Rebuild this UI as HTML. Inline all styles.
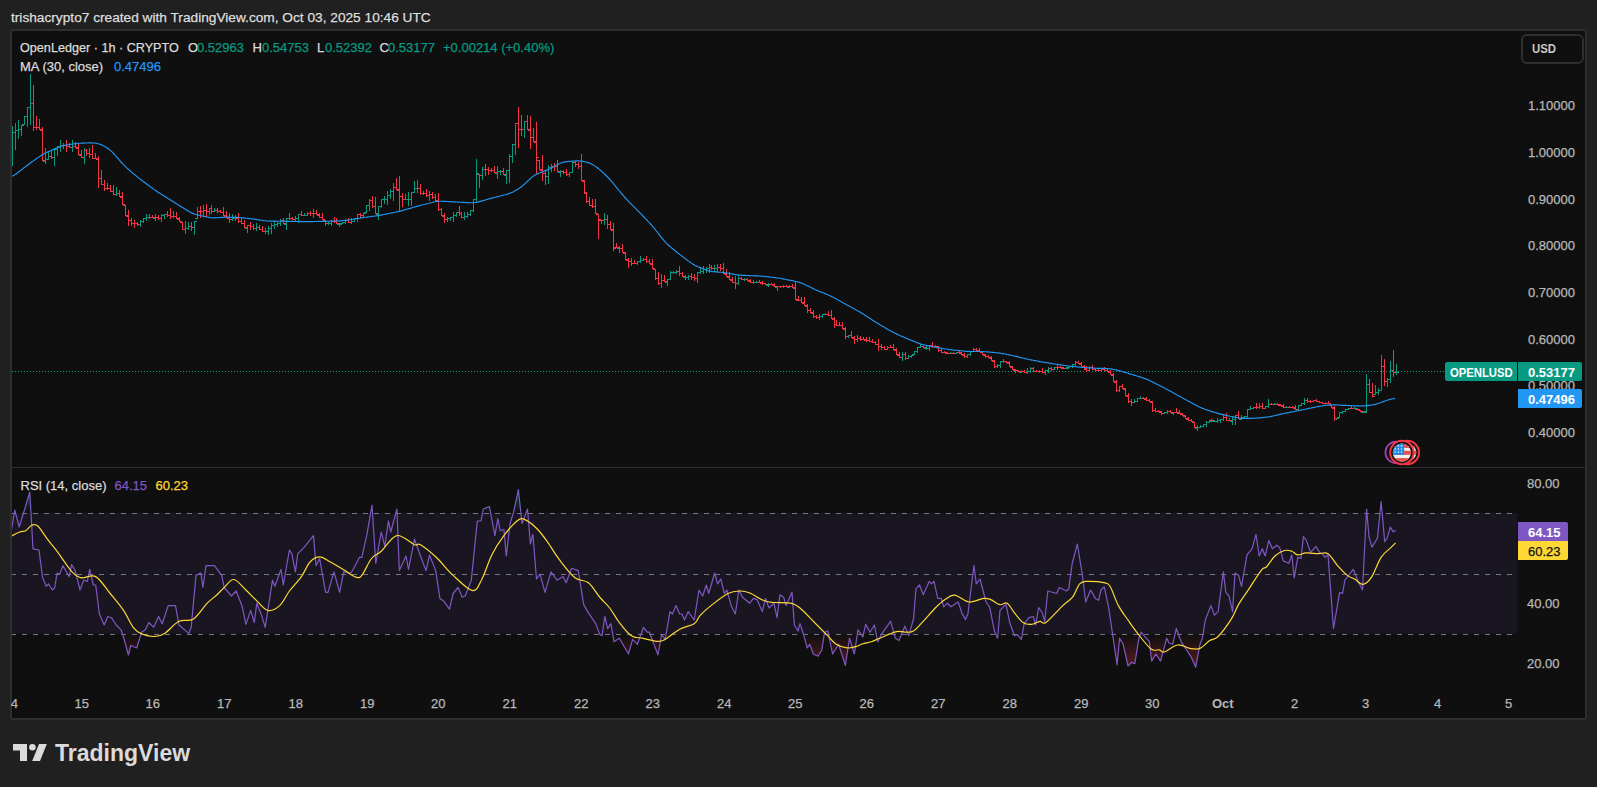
<!DOCTYPE html>
<html><head><meta charset="utf-8">
<style>
html,body{margin:0;padding:0}
body{width:1597px;height:787px;background:#202020;position:relative;overflow:hidden;font-family:"Liberation Sans",sans-serif;}
.t{position:absolute;white-space:nowrap;font-size:13px;line-height:15px;color:#dbdbdb;-webkit-text-stroke:0.25px currentColor}
.frame{position:absolute;left:10px;top:29px;width:1573px;height:687px;border:2px solid #2e2e2e;border-radius:3px;background:#0f0f0f}
.ax{position:absolute;white-space:nowrap;font-size:13px;line-height:15px;color:#b8b8b8;-webkit-text-stroke:0.25px currentColor}
.g{color:#089981}
.lab{position:absolute;height:19px;}
</style></head><body>
<div class="t" style="left:11px;top:9.6px;font-size:13.7px;color:#dedede">trishacrypto7 created with TradingView.com, Oct 03, 2025 10:46 UTC</div>
<div class="frame"></div>

<svg width="1597" height="787" style="position:absolute;left:0;top:0">
<defs>
<linearGradient id="gl" x1="0" y1="633.5" x2="0" y2="668" gradientUnits="userSpaceOnUse">
<stop offset="0" stop-color="#f23645" stop-opacity="0"/><stop offset="1" stop-color="#f23645" stop-opacity="0.32"/></linearGradient>
<linearGradient id="gh" x1="0" y1="513.5" x2="0" y2="488" gradientUnits="userSpaceOnUse">
<stop offset="0" stop-color="#089981" stop-opacity="0"/><stop offset="1" stop-color="#089981" stop-opacity="0.5"/></linearGradient>
<clipPath id="cp"><rect x="12" y="31" width="1504" height="436"/></clipPath>
<clipPath id="cr"><rect x="12" y="468" width="1505" height="222"/></clipPath>
</defs>
<line x1="12" y1="371.5" x2="1516" y2="371.5" stroke="#089981" stroke-width="1" stroke-dasharray="1 2"/>
<g clip-path="url(#cp)" shape-rendering="crispEdges">
<path d="M12 126h1v40h-1z M10 146h2v1h-2z M13 132h2v1h-2z M15 123h1v27h-1z M13 132h2v1h-2z M16 130h2v1h-2z M18 120h1v19h-1z M16 130h2v1h-2z M19 129h2v1h-2z M21 125h1v11h-1z M19 129h2v1h-2z M22 125h2v1h-2z M24 116h1v9h-1z M22 124h2v1h-2z M25 116h2v1h-2z M27 107h1v20h-1z M25 116h2v1h-2z M28 107h2v1h-2z M30 74h1v51h-1z M28 107h2v1h-2z M31 103h2v1h-2z M45 148h1v16h-1z M43 161h2v1h-2z M46 159h2v1h-2z M48 151h1v9h-1z M46 159h2v1h-2z M49 156h2v1h-2z M54 148h1v18h-1z M52 157h2v1h-2z M55 149h2v1h-2z M57 146h1v10h-1z M55 149h2v1h-2z M58 146h2v1h-2z M60 140h1v12h-1z M58 146h2v1h-2z M61 145h2v1h-2z M72 140h1v12h-1z M70 147h2v1h-2z M73 146h2v1h-2z M84 148h1v16h-1z M82 157h2v1h-2z M85 150h2v1h-2z M116 187h1v9h-1z M114 194h2v1h-2z M117 193h2v1h-2z M140 220h1v7h-1z M138 224h2v1h-2z M141 221h2v1h-2z M143 218h1v5h-1z M141 221h2v1h-2z M144 218h2v1h-2z M146 214h1v7h-1z M144 218h2v1h-2z M147 217h2v1h-2z M149 214h1v5h-1z M147 217h2v1h-2z M150 217h2v1h-2z M155 214h1v7h-1z M153 218h2v1h-2z M156 217h2v1h-2z M161 214h1v8h-1z M159 218h2v1h-2z M162 215h2v1h-2z M164 214h1v5h-1z M162 215h2v1h-2z M165 214h2v1h-2z M185 221h1v13h-1z M183 229h2v1h-2z M186 228h2v1h-2z M188 222h1v8h-1z M186 228h2v1h-2z M189 226h2v1h-2z M194 221h1v14h-1z M192 227h2v1h-2z M195 221h2v1h-2z M197 207h1v12h-1z M195 218h2v1h-2z M198 211h2v1h-2z M203 205h1v11h-1z M201 211h2v1h-2z M204 210h2v1h-2z M209 208h1v7h-1z M207 211h2v1h-2z M210 208h2v1h-2z M214 208h1v4h-1z M212 211h2v1h-2z M215 210h2v1h-2z M232 214h1v7h-1z M230 219h2v1h-2z M233 218h2v1h-2z M235 215h1v6h-1z M233 218h2v1h-2z M236 218h2v1h-2z M247 225h1v8h-1z M245 228h2v1h-2z M248 225h2v1h-2z M256 223h1v8h-1z M254 228h2v1h-2z M257 227h2v1h-2z M265 228h1v6h-1z M263 231h2v1h-2z M266 231h2v1h-2z M268 226h1v9h-1z M266 231h2v1h-2z M269 228h2v1h-2z M271 223h1v11h-1z M269 228h2v1h-2z M272 225h2v1h-2z M274 221h1v8h-1z M272 225h2v1h-2z M275 224h2v1h-2z M277 222h1v5h-1z M275 224h2v1h-2z M278 223h2v1h-2z M280 219h1v7h-1z M278 223h2v1h-2z M281 220h2v1h-2z M286 218h1v12h-1z M284 224h2v1h-2z M287 218h2v1h-2z M289 213h1v7h-1z M287 218h2v1h-2z M290 218h2v1h-2z M295 216h1v6h-1z M293 219h2v1h-2z M296 218h2v1h-2z M298 214h1v9h-1z M296 218h2v1h-2z M299 214h2v1h-2z M304 213h1v3h-1z M302 215h2v1h-2z M305 215h2v1h-2z M307 212h1v4h-1z M305 215h2v1h-2z M308 213h2v1h-2z M313 209h1v9h-1z M311 213h2v1h-2z M314 213h2v1h-2z M328 222h1v3h-1z M326 223h2v1h-2z M329 223h2v1h-2z M331 220h1v6h-1z M329 223h2v1h-2z M332 221h2v1h-2z M339 223h1v4h-1z M337 224h2v1h-2z M340 224h2v1h-2z M342 222h1v2h-1z M340 223h2v1h-2z M343 222h2v1h-2z M345 219h1v5h-1z M343 222h2v1h-2z M346 220h2v1h-2z M351 218h1v6h-1z M349 222h2v1h-2z M352 221h2v1h-2z M354 218h1v4h-1z M352 221h2v1h-2z M355 218h2v1h-2z M357 214h1v8h-1z M355 218h2v1h-2z M358 214h2v1h-2z M363 213h1v5h-1z M361 215h2v1h-2z M364 213h2v1h-2z M366 205h1v8h-1z M364 212h2v1h-2z M367 205h2v1h-2z M369 199h1v12h-1z M367 205h2v1h-2z M370 200h2v1h-2z M378 206h1v14h-1z M376 214h2v1h-2z M379 206h2v1h-2z M381 199h1v9h-1z M379 206h2v1h-2z M382 199h2v1h-2z M384 196h1v8h-1z M382 199h2v1h-2z M385 199h2v1h-2z M387 191h1v14h-1z M385 199h2v1h-2z M388 195h2v1h-2z M390 189h1v10h-1z M388 195h2v1h-2z M391 191h2v1h-2z M393 183h1v18h-1z M391 191h2v1h-2z M394 187h2v1h-2z M405 194h1v6h-1z M403 199h2v1h-2z M406 199h2v1h-2z M408 192h1v14h-1z M406 199h2v1h-2z M409 199h2v1h-2z M411 192h1v14h-1z M409 199h2v1h-2z M412 192h2v1h-2z M414 181h1v12h-1z M412 192h2v1h-2z M415 188h2v1h-2z M417 180h1v13h-1z M415 188h2v1h-2z M418 188h2v1h-2z M429 191h1v10h-1z M427 195h2v1h-2z M430 194h2v1h-2z M447 217h1v5h-1z M445 219h2v1h-2z M448 218h2v1h-2z M450 217h1v4h-1z M448 218h2v1h-2z M451 217h2v1h-2z M453 212h1v10h-1z M451 217h2v1h-2z M454 215h2v1h-2z M456 212h1v5h-1z M454 215h2v1h-2z M457 212h2v1h-2z M464 212h1v8h-1z M462 217h2v1h-2z M465 216h2v1h-2z M467 212h1v6h-1z M465 216h2v1h-2z M468 214h2v1h-2z M470 210h1v6h-1z M468 214h2v1h-2z M471 210h2v1h-2z M473 199h1v13h-1z M471 210h2v1h-2z M474 199h2v1h-2z M476 159h1v44h-1z M474 199h2v1h-2z M477 173h2v1h-2z M482 167h1v13h-1z M480 175h2v1h-2z M483 169h2v1h-2z M497 166h1v13h-1z M495 173h2v1h-2z M498 171h2v1h-2z M500 170h1v5h-1z M498 171h2v1h-2z M501 171h2v1h-2z M506 170h1v14h-1z M504 175h2v1h-2z M507 170h2v1h-2z M509 154h1v29h-1z M507 170h2v1h-2z M510 156h2v1h-2z M512 144h1v19h-1z M510 156h2v1h-2z M513 144h2v1h-2z M515 123h1v32h-1z M513 144h2v1h-2z M516 123h2v1h-2z M524 121h1v17h-1z M522 129h2v1h-2z M525 121h2v1h-2z M548 165h1v19h-1z M546 176h2v1h-2z M549 167h2v1h-2z M551 164h1v8h-1z M549 167h2v1h-2z M552 166h2v1h-2z M560 170h1v7h-1z M558 172h2v1h-2z M561 171h2v1h-2z M569 172h1v5h-1z M567 174h2v1h-2z M570 172h2v1h-2z M572 161h1v12h-1z M570 172h2v1h-2z M573 162h2v1h-2z M604 213h1v12h-1z M602 220h2v1h-2z M605 219h2v1h-2z M619 246h1v7h-1z M617 248h2v1h-2z M620 248h2v1h-2z M637 261h1v4h-1z M635 263h2v1h-2z M638 261h2v1h-2z M640 256h1v7h-1z M638 261h2v1h-2z M641 260h2v1h-2z M643 258h1v3h-1z M641 260h2v1h-2z M644 259h2v1h-2z M661 274h1v14h-1z M659 283h2v1h-2z M662 280h2v1h-2z M667 279h1v7h-1z M665 282h2v1h-2z M668 279h2v1h-2z M670 271h1v9h-1z M668 279h2v1h-2z M671 272h2v1h-2z M673 271h1v3h-1z M671 272h2v1h-2z M674 272h2v1h-2z M676 270h1v4h-1z M674 272h2v1h-2z M677 271h2v1h-2z M685 275h1v5h-1z M683 277h2v1h-2z M686 277h2v1h-2z M688 275h1v5h-1z M686 277h2v1h-2z M689 276h2v1h-2z M697 272h1v11h-1z M695 278h2v1h-2z M698 272h2v1h-2z M700 267h1v7h-1z M698 272h2v1h-2z M701 271h2v1h-2z M703 266h1v8h-1z M701 271h2v1h-2z M704 269h2v1h-2z M706 267h1v6h-1z M704 269h2v1h-2z M707 268h2v1h-2z M709 264h1v9h-1z M707 268h2v1h-2z M710 267h2v1h-2z M714 265h1v7h-1z M712 268h2v1h-2z M715 268h2v1h-2z M717 264h1v8h-1z M715 268h2v1h-2z M718 267h2v1h-2z M738 275h1v10h-1z M736 283h2v1h-2z M739 278h2v1h-2z M744 278h1v3h-1z M742 279h2v1h-2z M745 279h2v1h-2z M753 280h1v4h-1z M751 282h2v1h-2z M754 282h2v1h-2z M756 281h1v2h-1z M754 282h2v1h-2z M757 282h2v1h-2z M768 283h1v4h-1z M766 285h2v1h-2z M769 284h2v1h-2z M777 286h1v5h-1z M775 287h2v1h-2z M778 286h2v1h-2z M783 285h1v3h-1z M781 286h2v1h-2z M784 286h2v1h-2z M789 285h1v3h-1z M787 287h2v1h-2z M790 286h2v1h-2z M819 314h1v6h-1z M817 317h2v1h-2z M820 316h2v1h-2z M822 314h1v4h-1z M820 316h2v1h-2z M823 314h2v1h-2z M825 313h1v2h-1z M823 314h2v1h-2z M826 314h2v1h-2z M848 335h1v3h-1z M846 336h2v1h-2z M849 335h2v1h-2z M857 335h1v7h-1z M855 339h2v1h-2z M858 338h2v1h-2z M887 346h1v4h-1z M885 349h2v1h-2z M888 347h2v1h-2z M902 352h1v9h-1z M900 357h2v1h-2z M903 354h2v1h-2z M908 355h1v4h-1z M906 358h2v1h-2z M909 356h2v1h-2z M911 355h1v3h-1z M909 356h2v1h-2z M912 355h2v1h-2z M914 351h1v4h-1z M912 354h2v1h-2z M915 351h2v1h-2z M917 347h1v6h-1z M915 351h2v1h-2z M918 347h2v1h-2z M920 344h1v4h-1z M918 347h2v1h-2z M921 346h2v1h-2z M926 345h1v5h-1z M924 348h2v1h-2z M927 348h2v1h-2z M929 345h1v6h-1z M927 348h2v1h-2z M930 345h2v1h-2z M950 352h1v2h-1z M948 353h2v1h-2z M951 353h2v1h-2z M956 352h1v2h-1z M954 353h2v1h-2z M957 352h2v1h-2z M967 354h1v4h-1z M965 356h2v1h-2z M968 354h2v1h-2z M970 351h1v5h-1z M968 354h2v1h-2z M971 351h2v1h-2z M973 348h1v4h-1z M971 351h2v1h-2z M974 349h2v1h-2z M997 364h1v4h-1z M995 366h2v1h-2z M998 365h2v1h-2z M1000 361h1v7h-1z M998 365h2v1h-2z M1001 361h2v1h-2z M1003 359h1v4h-1z M1001 361h2v1h-2z M1004 361h2v1h-2z M1021 370h1v3h-1z M1019 372h2v1h-2z M1022 371h2v1h-2z M1027 368h1v6h-1z M1025 372h2v1h-2z M1028 371h2v1h-2z M1030 367h1v6h-1z M1028 371h2v1h-2z M1031 368h2v1h-2z M1039 370h1v3h-1z M1037 371h2v1h-2z M1040 371h2v1h-2z M1045 370h1v5h-1z M1043 372h2v1h-2z M1046 370h2v1h-2z M1048 367h1v6h-1z M1046 370h2v1h-2z M1049 368h2v1h-2z M1054 367h1v3h-1z M1052 369h2v1h-2z M1055 367h2v1h-2z M1066 367h1v2h-1z M1064 368h2v1h-2z M1067 368h2v1h-2z M1069 366h1v2h-1z M1067 367h2v1h-2z M1070 366h2v1h-2z M1072 364h1v4h-1z M1070 366h2v1h-2z M1073 364h2v1h-2z M1075 361h1v5h-1z M1073 364h2v1h-2z M1076 362h2v1h-2z M1089 366h1v6h-1z M1087 370h2v1h-2z M1090 367h2v1h-2z M1101 369h1v3h-1z M1099 370h2v1h-2z M1102 369h2v1h-2z M1119 386h1v6h-1z M1117 390h2v1h-2z M1120 386h2v1h-2z M1134 399h1v4h-1z M1132 402h2v1h-2z M1135 401h2v1h-2z M1137 398h1v4h-1z M1135 401h2v1h-2z M1138 398h2v1h-2z M1140 396h1v3h-1z M1138 398h2v1h-2z M1141 398h2v1h-2z M1164 412h1v2h-1z M1162 413h2v1h-2z M1165 412h2v1h-2z M1167 410h1v4h-1z M1165 412h2v1h-2z M1168 411h2v1h-2z M1173 412h1v3h-1z M1171 413h2v1h-2z M1174 412h2v1h-2z M1197 425h1v6h-1z M1195 428h2v1h-2z M1198 427h2v1h-2z M1200 425h1v3h-1z M1198 427h2v1h-2z M1201 426h2v1h-2z M1203 424h1v3h-1z M1201 426h2v1h-2z M1204 424h2v1h-2z M1206 421h1v6h-1z M1204 424h2v1h-2z M1207 422h2v1h-2z M1209 420h1v3h-1z M1207 422h2v1h-2z M1210 421h2v1h-2z M1214 420h1v2h-1z M1212 421h2v1h-2z M1215 421h2v1h-2z M1217 418h1v5h-1z M1215 421h2v1h-2z M1218 420h2v1h-2z M1220 419h1v4h-1z M1218 420h2v1h-2z M1221 419h2v1h-2z M1223 414h1v7h-1z M1221 419h2v1h-2z M1224 417h2v1h-2z M1232 416h1v9h-1z M1230 421h2v1h-2z M1233 419h2v1h-2z M1235 415h1v10h-1z M1233 419h2v1h-2z M1236 415h2v1h-2z M1241 415h1v5h-1z M1239 419h2v1h-2z M1242 417h2v1h-2z M1244 416h1v3h-1z M1242 417h2v1h-2z M1245 416h2v1h-2z M1247 409h1v9h-1z M1245 416h2v1h-2z M1248 409h2v1h-2z M1250 406h1v4h-1z M1248 409h2v1h-2z M1251 408h2v1h-2z M1253 407h1v2h-1z M1251 408h2v1h-2z M1254 407h2v1h-2z M1259 403h1v6h-1z M1257 407h2v1h-2z M1260 406h2v1h-2z M1265 406h1v3h-1z M1263 408h2v1h-2z M1266 406h2v1h-2z M1268 399h1v9h-1z M1266 406h2v1h-2z M1269 404h2v1h-2z M1274 403h1v2h-1z M1272 404h2v1h-2z M1275 404h2v1h-2z M1286 406h1v2h-1z M1284 407h2v1h-2z M1287 407h2v1h-2z M1298 405h1v5h-1z M1296 409h2v1h-2z M1299 405h2v1h-2z M1301 403h1v3h-1z M1299 405h2v1h-2z M1302 403h2v1h-2z M1304 398h1v7h-1z M1302 403h2v1h-2z M1305 400h2v1h-2z M1313 400h1v2h-1z M1311 401h2v1h-2z M1314 400h2v1h-2z M1325 402h1v2h-1z M1323 403h2v1h-2z M1326 403h2v1h-2z M1336 418h1v2h-1z M1334 418h2v1h-2z M1337 418h2v1h-2z M1339 412h1v6h-1z M1337 417h2v1h-2z M1340 412h2v1h-2z M1342 411h1v3h-1z M1340 412h2v1h-2z M1343 411h2v1h-2z M1345 409h1v3h-1z M1343 411h2v1h-2z M1346 409h2v1h-2z M1348 408h1v2h-1z M1346 409h2v1h-2z M1349 408h2v1h-2z M1354 407h1v2h-1z M1352 408h2v1h-2z M1355 408h2v1h-2z M1363 411h1v2h-1z M1361 412h2v1h-2z M1364 411h2v1h-2z M1366 374h1v39h-1z M1364 412h2v1h-2z M1367 384h2v1h-2z M1375 385h1v10h-1z M1373 394h2v1h-2z M1376 392h2v1h-2z M1378 388h1v7h-1z M1376 392h2v1h-2z M1379 390h2v1h-2z M1381 355h1v36h-1z M1379 390h2v1h-2z M1382 366h2v1h-2z M1387 378h1v9h-1z M1385 381h2v1h-2z M1388 379h2v1h-2z M1390 361h1v22h-1z M1388 379h2v1h-2z M1391 370h2v1h-2z M1396 364h1v11h-1z M1394 372h2v1h-2z M1397 372h2v1h-2z " fill="#089981"/>
<path d="M33 85h1v46h-1z M31 103h2v1h-2z M34 127h2v1h-2z M36 116h1v14h-1z M34 127h2v1h-2z M37 127h2v1h-2z M39 119h1v11h-1z M37 127h2v1h-2z M40 129h2v1h-2z M42 127h1v34h-1z M40 130h2v1h-2z M43 160h2v1h-2z M51 150h1v9h-1z M49 156h2v1h-2z M52 157h2v1h-2z M63 143h1v6h-1z M61 145h2v1h-2z M64 145h2v1h-2z M66 140h1v12h-1z M64 145h2v1h-2z M67 146h2v1h-2z M69 143h1v5h-1z M67 146h2v1h-2z M70 147h2v1h-2z M75 142h1v6h-1z M73 146h2v1h-2z M76 147h2v1h-2z M78 143h1v12h-1z M76 148h2v1h-2z M79 154h2v1h-2z M81 150h1v8h-1z M79 155h2v1h-2z M82 157h2v1h-2z M86 149h1v7h-1z M84 150h2v1h-2z M87 153h2v1h-2z M89 148h1v10h-1z M87 153h2v1h-2z M90 154h2v1h-2z M92 145h1v14h-1z M90 154h2v1h-2z M93 158h2v1h-2z M95 153h1v6h-1z M93 158h2v1h-2z M96 158h2v1h-2z M98 156h1v32h-1z M96 159h2v1h-2z M99 178h2v1h-2z M101 170h1v15h-1z M99 178h2v1h-2z M102 184h2v1h-2z M104 180h1v11h-1z M102 184h2v1h-2z M105 188h2v1h-2z M107 183h1v7h-1z M105 188h2v1h-2z M108 188h2v1h-2z M110 185h1v7h-1z M108 188h2v1h-2z M111 191h2v1h-2z M113 185h1v10h-1z M111 191h2v1h-2z M114 194h2v1h-2z M119 190h1v7h-1z M117 193h2v1h-2z M120 196h2v1h-2z M122 192h1v13h-1z M120 197h2v1h-2z M123 204h2v1h-2z M125 205h1v11h-1z M123 205h2v1h-2z M126 215h2v1h-2z M128 210h1v16h-1z M126 216h2v1h-2z M129 220h2v1h-2z M131 218h1v8h-1z M129 220h2v1h-2z M132 223h2v1h-2z M134 220h1v8h-1z M132 223h2v1h-2z M135 223h2v1h-2z M137 222h1v4h-1z M135 223h2v1h-2z M138 224h2v1h-2z M152 215h1v3h-1z M150 217h2v1h-2z M153 217h2v1h-2z M158 215h1v5h-1z M156 217h2v1h-2z M159 218h2v1h-2z M167 211h1v6h-1z M165 214h2v1h-2z M168 215h2v1h-2z M170 208h1v11h-1z M168 215h2v1h-2z M171 216h2v1h-2z M173 211h1v7h-1z M171 216h2v1h-2z M174 216h2v1h-2z M176 212h1v7h-1z M174 216h2v1h-2z M177 218h2v1h-2z M179 217h1v5h-1z M177 219h2v1h-2z M180 221h2v1h-2z M182 222h1v8h-1z M180 222h2v1h-2z M183 229h2v1h-2z M191 222h1v9h-1z M189 226h2v1h-2z M192 227h2v1h-2z M200 206h1v12h-1z M198 211h2v1h-2z M201 211h2v1h-2z M206 204h1v13h-1z M204 210h2v1h-2z M207 211h2v1h-2z M211 205h1v9h-1z M209 208h2v1h-2z M212 211h2v1h-2z M217 208h1v5h-1z M215 210h2v1h-2z M218 211h2v1h-2z M220 210h1v3h-1z M218 211h2v1h-2z M221 212h2v1h-2z M223 207h1v9h-1z M221 212h2v1h-2z M224 215h2v1h-2z M226 211h1v7h-1z M224 216h2v1h-2z M227 217h2v1h-2z M229 213h1v10h-1z M227 218h2v1h-2z M230 219h2v1h-2z M238 213h1v10h-1z M236 218h2v1h-2z M239 221h2v1h-2z M241 218h1v6h-1z M239 221h2v1h-2z M242 223h2v1h-2z M244 220h1v8h-1z M242 223h2v1h-2z M245 227h2v1h-2z M250 222h1v8h-1z M248 225h2v1h-2z M251 226h2v1h-2z M253 224h1v6h-1z M251 226h2v1h-2z M254 228h2v1h-2z M259 225h1v5h-1z M257 227h2v1h-2z M260 229h2v1h-2z M262 226h1v6h-1z M260 229h2v1h-2z M263 231h2v1h-2z M283 218h1v6h-1z M281 220h2v1h-2z M284 223h2v1h-2z M292 217h1v3h-1z M290 218h2v1h-2z M293 219h2v1h-2z M301 211h1v5h-1z M299 214h2v1h-2z M302 215h2v1h-2z M310 211h1v5h-1z M308 213h2v1h-2z M311 213h2v1h-2z M316 210h1v5h-1z M314 213h2v1h-2z M317 214h2v1h-2z M319 213h1v5h-1z M317 215h2v1h-2z M320 217h2v1h-2z M322 213h1v7h-1z M320 217h2v1h-2z M323 219h2v1h-2z M325 220h1v6h-1z M323 220h2v1h-2z M326 223h2v1h-2z M334 217h1v6h-1z M332 221h2v1h-2z M335 221h2v1h-2z M336 218h1v6h-1z M334 221h2v1h-2z M337 223h2v1h-2z M348 218h1v5h-1z M346 220h2v1h-2z M349 222h2v1h-2z M360 213h1v5h-1z M358 214h2v1h-2z M361 215h2v1h-2z M372 196h1v12h-1z M370 200h2v1h-2z M373 206h2v1h-2z M375 197h1v17h-1z M373 206h2v1h-2z M376 213h2v1h-2z M396 178h1v12h-1z M394 187h2v1h-2z M397 189h2v1h-2z M399 176h1v35h-1z M397 190h2v1h-2z M400 196h2v1h-2z M402 193h1v14h-1z M400 196h2v1h-2z M403 199h2v1h-2z M420 184h1v11h-1z M418 188h2v1h-2z M421 193h2v1h-2z M423 191h1v4h-1z M421 193h2v1h-2z M424 193h2v1h-2z M426 189h1v8h-1z M424 193h2v1h-2z M427 195h2v1h-2z M432 192h1v7h-1z M430 194h2v1h-2z M433 197h2v1h-2z M435 194h1v7h-1z M433 197h2v1h-2z M436 200h2v1h-2z M438 193h1v18h-1z M436 201h2v1h-2z M439 209h2v1h-2z M441 208h1v8h-1z M439 209h2v1h-2z M442 215h2v1h-2z M444 213h1v10h-1z M442 216h2v1h-2z M445 219h2v1h-2z M459 206h1v10h-1z M457 212h2v1h-2z M460 213h2v1h-2z M461 212h1v6h-1z M459 213h2v1h-2z M462 217h2v1h-2z M479 174h1v14h-1z M477 174h2v1h-2z M480 175h2v1h-2z M485 164h1v12h-1z M483 169h2v1h-2z M486 169h2v1h-2z M488 167h1v8h-1z M486 169h2v1h-2z M489 170h2v1h-2z M491 168h1v4h-1z M489 170h2v1h-2z M492 170h2v1h-2z M494 166h1v7h-1z M492 170h2v1h-2z M495 172h2v1h-2z M503 168h1v7h-1z M501 171h2v1h-2z M504 174h2v1h-2z M518 107h1v41h-1z M516 123h2v1h-2z M519 129h2v1h-2z M521 115h1v21h-1z M519 129h2v1h-2z M522 129h2v1h-2z M527 115h1v15h-1z M525 121h2v1h-2z M528 129h2v1h-2z M530 116h1v33h-1z M528 130h2v1h-2z M531 137h2v1h-2z M533 128h1v14h-1z M531 137h2v1h-2z M534 141h2v1h-2z M536 122h1v52h-1z M534 142h2v1h-2z M537 157h2v1h-2z M539 160h1v10h-1z M537 160h2v1h-2z M540 169h2v1h-2z M542 155h1v26h-1z M540 170h2v1h-2z M543 173h2v1h-2z M545 170h1v15h-1z M543 173h2v1h-2z M546 176h2v1h-2z M554 163h1v8h-1z M552 166h2v1h-2z M555 166h2v1h-2z M557 160h1v12h-1z M555 166h2v1h-2z M558 171h2v1h-2z M563 170h1v4h-1z M561 171h2v1h-2z M564 172h2v1h-2z M566 169h1v7h-1z M564 172h2v1h-2z M567 174h2v1h-2z M575 161h1v6h-1z M573 162h2v1h-2z M576 164h2v1h-2z M578 162h1v7h-1z M576 164h2v1h-2z M579 166h2v1h-2z M581 154h1v27h-1z M579 166h2v1h-2z M582 180h2v1h-2z M584 180h1v13h-1z M582 181h2v1h-2z M585 192h2v1h-2z M586 192h1v11h-1z M584 193h2v1h-2z M587 201h2v1h-2z M589 197h1v9h-1z M587 201h2v1h-2z M590 205h2v1h-2z M592 199h1v9h-1z M590 205h2v1h-2z M593 206h2v1h-2z M595 199h1v15h-1z M593 206h2v1h-2z M596 213h2v1h-2z M598 214h1v25h-1z M596 214h2v1h-2z M599 219h2v1h-2z M601 220h1v4h-1z M599 220h2v1h-2z M602 220h2v1h-2z M607 215h1v14h-1z M605 219h2v1h-2z M608 224h2v1h-2z M610 221h1v9h-1z M608 224h2v1h-2z M611 229h2v1h-2z M613 223h1v28h-1z M611 230h2v1h-2z M614 248h2v1h-2z M616 243h1v5h-1z M614 247h2v1h-2z M617 247h2v1h-2z M622 244h1v9h-1z M620 248h2v1h-2z M623 252h2v1h-2z M625 252h1v8h-1z M623 253h2v1h-2z M626 259h2v1h-2z M628 258h1v10h-1z M626 260h2v1h-2z M629 261h2v1h-2z M631 258h1v8h-1z M629 261h2v1h-2z M632 263h2v1h-2z M634 260h1v4h-1z M632 263h2v1h-2z M635 263h2v1h-2z M646 256h1v7h-1z M644 259h2v1h-2z M647 261h2v1h-2z M649 259h1v5h-1z M647 261h2v1h-2z M650 263h2v1h-2z M652 259h1v10h-1z M650 264h2v1h-2z M653 268h2v1h-2z M655 269h1v11h-1z M653 269h2v1h-2z M656 278h2v1h-2z M658 272h1v13h-1z M656 278h2v1h-2z M659 283h2v1h-2z M664 275h1v7h-1z M662 280h2v1h-2z M665 281h2v1h-2z M679 266h1v10h-1z M677 271h2v1h-2z M680 273h2v1h-2z M682 272h1v5h-1z M680 273h2v1h-2z M683 276h2v1h-2z M691 273h1v7h-1z M689 276h2v1h-2z M692 277h2v1h-2z M694 274h1v7h-1z M692 277h2v1h-2z M695 278h2v1h-2z M711 265h1v5h-1z M709 267h2v1h-2z M712 268h2v1h-2z M720 264h1v7h-1z M718 267h2v1h-2z M721 268h2v1h-2z M723 263h1v11h-1z M721 268h2v1h-2z M724 273h2v1h-2z M726 269h1v8h-1z M724 274h2v1h-2z M727 276h2v1h-2z M729 272h1v8h-1z M727 277h2v1h-2z M730 279h2v1h-2z M732 277h1v6h-1z M730 280h2v1h-2z M733 282h2v1h-2z M735 276h1v13h-1z M733 282h2v1h-2z M736 283h2v1h-2z M741 277h1v3h-1z M739 278h2v1h-2z M742 279h2v1h-2z M747 278h1v3h-1z M745 279h2v1h-2z M748 280h2v1h-2z M750 279h1v4h-1z M748 281h2v1h-2z M751 282h2v1h-2z M759 280h1v3h-1z M757 282h2v1h-2z M760 282h2v1h-2z M762 281h1v4h-1z M760 283h2v1h-2z M763 283h2v1h-2z M765 283h1v2h-1z M763 283h2v1h-2z M766 284h2v1h-2z M771 283h1v2h-1z M769 284h2v1h-2z M772 284h2v1h-2z M774 283h1v4h-1z M772 285h2v1h-2z M775 286h2v1h-2z M780 286h1v2h-1z M778 286h2v1h-2z M781 286h2v1h-2z M786 285h1v2h-1z M784 286h2v1h-2z M787 286h2v1h-2z M792 284h1v4h-1z M790 286h2v1h-2z M793 287h2v1h-2z M795 282h1v18h-1z M793 288h2v1h-2z M796 299h2v1h-2z M798 296h1v5h-1z M796 300h2v1h-2z M799 300h2v1h-2z M801 297h1v6h-1z M799 300h2v1h-2z M802 302h2v1h-2z M804 297h1v9h-1z M802 303h2v1h-2z M805 305h2v1h-2z M807 304h1v9h-1z M805 306h2v1h-2z M808 310h2v1h-2z M810 308h1v5h-1z M808 310h2v1h-2z M811 312h2v1h-2z M813 310h1v8h-1z M811 313h2v1h-2z M814 316h2v1h-2z M816 315h1v4h-1z M814 316h2v1h-2z M817 317h2v1h-2z M828 311h1v5h-1z M826 314h2v1h-2z M829 315h2v1h-2z M831 310h1v9h-1z M829 315h2v1h-2z M832 318h2v1h-2z M834 317h1v11h-1z M832 319h2v1h-2z M835 324h2v1h-2z M836 320h1v6h-1z M834 324h2v1h-2z M837 325h2v1h-2z M839 322h1v4h-1z M837 325h2v1h-2z M840 325h2v1h-2z M842 322h1v7h-1z M840 325h2v1h-2z M843 328h2v1h-2z M845 327h1v12h-1z M843 329h2v1h-2z M846 336h2v1h-2z M851 331h1v7h-1z M849 335h2v1h-2z M852 337h2v1h-2z M854 336h1v8h-1z M852 338h2v1h-2z M855 339h2v1h-2z M860 336h1v5h-1z M858 338h2v1h-2z M861 339h2v1h-2z M863 337h1v3h-1z M861 339h2v1h-2z M864 339h2v1h-2z M866 337h1v5h-1z M864 340h2v1h-2z M867 340h2v1h-2z M869 337h1v5h-1z M867 340h2v1h-2z M870 341h2v1h-2z M872 339h1v4h-1z M870 341h2v1h-2z M873 342h2v1h-2z M875 341h1v4h-1z M873 342h2v1h-2z M876 344h2v1h-2z M878 339h1v12h-1z M876 344h2v1h-2z M879 346h2v1h-2z M881 344h1v6h-1z M879 346h2v1h-2z M882 347h2v1h-2z M884 346h1v4h-1z M882 347h2v1h-2z M885 349h2v1h-2z M890 345h1v3h-1z M888 347h2v1h-2z M891 347h2v1h-2z M893 344h1v6h-1z M891 347h2v1h-2z M894 349h2v1h-2z M896 348h1v7h-1z M894 350h2v1h-2z M897 354h2v1h-2z M899 352h1v6h-1z M897 355h2v1h-2z M900 357h2v1h-2z M905 352h1v8h-1z M903 354h2v1h-2z M906 358h2v1h-2z M923 346h1v2h-1z M921 346h2v1h-2z M924 347h2v1h-2z M932 342h1v6h-1z M930 345h2v1h-2z M933 346h2v1h-2z M935 345h1v2h-1z M933 346h2v1h-2z M936 346h2v1h-2z M938 346h1v6h-1z M936 347h2v1h-2z M939 350h2v1h-2z M941 349h1v4h-1z M939 350h2v1h-2z M942 352h2v1h-2z M944 351h1v2h-1z M942 352h2v1h-2z M945 352h2v1h-2z M947 352h1v2h-1z M945 353h2v1h-2z M948 353h2v1h-2z M953 352h1v2h-1z M951 353h2v1h-2z M954 353h2v1h-2z M959 351h1v2h-1z M957 352h2v1h-2z M960 352h2v1h-2z M961 353h1v2h-1z M959 353h2v1h-2z M962 354h2v1h-2z M964 353h1v5h-1z M962 355h2v1h-2z M965 356h2v1h-2z M976 348h1v4h-1z M974 349h2v1h-2z M977 350h2v1h-2z M979 348h1v4h-1z M977 350h2v1h-2z M980 351h2v1h-2z M982 352h1v3h-1z M980 352h2v1h-2z M983 354h2v1h-2z M985 354h1v4h-1z M983 355h2v1h-2z M986 356h2v1h-2z M988 355h1v3h-1z M986 356h2v1h-2z M989 357h2v1h-2z M991 356h1v5h-1z M989 358h2v1h-2z M992 360h2v1h-2z M994 360h1v8h-1z M992 361h2v1h-2z M995 366h2v1h-2z M1006 361h1v2h-1z M1004 361h2v1h-2z M1007 362h2v1h-2z M1009 361h1v6h-1z M1007 363h2v1h-2z M1010 366h2v1h-2z M1012 366h1v4h-1z M1010 367h2v1h-2z M1013 369h2v1h-2z M1015 369h1v4h-1z M1013 370h2v1h-2z M1016 370h2v1h-2z M1018 370h1v2h-1z M1016 370h2v1h-2z M1019 371h2v1h-2z M1024 370h1v3h-1z M1022 371h2v1h-2z M1025 372h2v1h-2z M1033 367h1v5h-1z M1031 368h2v1h-2z M1034 371h2v1h-2z M1036 370h1v2h-1z M1034 371h2v1h-2z M1037 371h2v1h-2z M1042 368h1v5h-1z M1040 371h2v1h-2z M1043 372h2v1h-2z M1051 367h1v4h-1z M1049 368h2v1h-2z M1052 369h2v1h-2z M1057 365h1v5h-1z M1055 367h2v1h-2z M1058 367h2v1h-2z M1060 366h1v2h-1z M1058 367h2v1h-2z M1061 367h2v1h-2z M1063 367h1v2h-1z M1061 368h2v1h-2z M1064 368h2v1h-2z M1078 361h1v3h-1z M1076 362h2v1h-2z M1079 363h2v1h-2z M1081 362h1v5h-1z M1079 364h2v1h-2z M1082 366h2v1h-2z M1084 365h1v4h-1z M1082 367h2v1h-2z M1085 368h2v1h-2z M1086 366h1v6h-1z M1084 369h2v1h-2z M1087 370h2v1h-2z M1092 365h1v5h-1z M1090 367h2v1h-2z M1093 369h2v1h-2z M1095 368h1v3h-1z M1093 369h2v1h-2z M1096 370h2v1h-2z M1098 369h1v2h-1z M1096 370h2v1h-2z M1099 370h2v1h-2z M1104 367h1v4h-1z M1102 369h2v1h-2z M1105 370h2v1h-2z M1107 369h1v3h-1z M1105 370h2v1h-2z M1108 371h2v1h-2z M1110 370h1v5h-1z M1108 372h2v1h-2z M1111 374h2v1h-2z M1113 373h1v9h-1z M1111 375h2v1h-2z M1114 381h2v1h-2z M1116 380h1v12h-1z M1114 382h2v1h-2z M1117 390h2v1h-2z M1122 384h1v5h-1z M1120 386h2v1h-2z M1123 388h2v1h-2z M1125 388h1v8h-1z M1123 389h2v1h-2z M1126 395h2v1h-2z M1128 393h1v10h-1z M1126 396h2v1h-2z M1129 401h2v1h-2z M1131 399h1v7h-1z M1129 401h2v1h-2z M1132 402h2v1h-2z M1143 397h1v2h-1z M1141 398h2v1h-2z M1144 398h2v1h-2z M1146 397h1v4h-1z M1144 399h2v1h-2z M1147 400h2v1h-2z M1149 399h1v3h-1z M1147 400h2v1h-2z M1150 401h2v1h-2z M1152 401h1v11h-1z M1150 402h2v1h-2z M1153 410h2v1h-2z M1155 408h1v4h-1z M1153 410h2v1h-2z M1156 411h2v1h-2z M1158 410h1v2h-1z M1156 411h2v1h-2z M1159 411h2v1h-2z M1161 411h1v4h-1z M1159 412h2v1h-2z M1162 413h2v1h-2z M1170 410h1v3h-1z M1168 411h2v1h-2z M1171 412h2v1h-2z M1176 408h1v5h-1z M1174 412h2v1h-2z M1177 412h2v1h-2z M1179 410h1v4h-1z M1177 413h2v1h-2z M1180 413h2v1h-2z M1182 413h1v3h-1z M1180 414h2v1h-2z M1183 415h2v1h-2z M1185 415h1v4h-1z M1183 416h2v1h-2z M1186 418h2v1h-2z M1188 417h1v4h-1z M1186 419h2v1h-2z M1189 420h2v1h-2z M1191 419h1v3h-1z M1189 420h2v1h-2z M1192 421h2v1h-2z M1194 422h1v6h-1z M1192 422h2v1h-2z M1195 427h2v1h-2z M1211 419h1v2h-1z M1209 420h2v1h-2z M1212 420h2v1h-2z M1226 413h1v8h-1z M1224 417h2v1h-2z M1227 420h2v1h-2z M1229 418h1v3h-1z M1227 420h2v1h-2z M1230 420h2v1h-2z M1238 411h1v8h-1z M1236 415h2v1h-2z M1239 418h2v1h-2z M1256 403h1v6h-1z M1254 407h2v1h-2z M1257 407h2v1h-2z M1262 403h1v6h-1z M1260 406h2v1h-2z M1263 408h2v1h-2z M1271 403h1v2h-1z M1269 404h2v1h-2z M1272 404h2v1h-2z M1277 403h1v2h-1z M1275 404h2v1h-2z M1278 404h2v1h-2z M1280 404h1v2h-1z M1278 405h2v1h-2z M1281 405h2v1h-2z M1283 404h1v4h-1z M1281 406h2v1h-2z M1284 407h2v1h-2z M1289 406h1v2h-1z M1287 407h2v1h-2z M1290 407h2v1h-2z M1292 406h1v2h-1z M1290 407h2v1h-2z M1293 407h2v1h-2z M1295 405h1v5h-1z M1293 408h2v1h-2z M1296 409h2v1h-2z M1307 398h1v5h-1z M1305 400h2v1h-2z M1308 401h2v1h-2z M1310 400h1v3h-1z M1308 401h2v1h-2z M1311 401h2v1h-2z M1316 399h1v3h-1z M1314 400h2v1h-2z M1317 401h2v1h-2z M1319 401h1v2h-1z M1317 401h2v1h-2z M1320 402h2v1h-2z M1322 402h1v2h-1z M1320 402h2v1h-2z M1323 403h2v1h-2z M1328 401h1v3h-1z M1326 403h2v1h-2z M1329 403h2v1h-2z M1331 405h1v3h-1z M1329 405h2v1h-2z M1332 407h2v1h-2z M1334 406h1v15h-1z M1332 408h2v1h-2z M1335 418h2v1h-2z M1351 406h1v3h-1z M1349 408h2v1h-2z M1352 408h2v1h-2z M1357 408h1v2h-1z M1355 409h2v1h-2z M1358 409h2v1h-2z M1360 410h1v2h-1z M1358 410h2v1h-2z M1361 411h2v1h-2z M1369 379h1v14h-1z M1367 384h2v1h-2z M1370 392h2v1h-2z M1372 383h1v14h-1z M1370 392h2v1h-2z M1373 396h2v1h-2z M1384 359h1v27h-1z M1382 366h2v1h-2z M1385 381h2v1h-2z M1393 350h1v27h-1z M1391 370h2v1h-2z M1394 372h2v1h-2z " fill="#f23645"/>
</g>
<path clip-path="url(#cp)" d="M10.0 177.1 L11.0 176.7 L12.0 176.3 L13.0 175.8 L14.0 175.3 L15.0 174.6 L16.0 174.0 L17.0 173.2 L18.0 172.5 L19.0 171.7 L20.0 170.9 L21.0 170.2 L22.0 169.4 L23.0 168.6 L24.0 167.8 L25.0 167.1 L26.0 166.3 L27.0 165.5 L28.0 164.7 L29.0 164.0 L30.0 163.2 L31.0 162.5 L32.0 161.8 L33.0 161.1 L34.0 160.4 L35.0 159.7 L36.0 159.0 L37.0 158.3 L38.0 157.6 L39.0 156.9 L40.0 156.3 L41.0 155.6 L42.0 155.0 L43.0 154.4 L44.0 153.8 L45.0 153.3 L46.0 152.8 L47.0 152.3 L48.0 151.8 L49.0 151.4 L50.0 150.9 L51.0 150.5 L52.0 150.1 L53.0 149.6 L54.0 149.2 L55.0 148.8 L56.0 148.3 L57.0 147.9 L58.0 147.5 L59.0 147.1 L60.0 146.7 L61.0 146.3 L62.0 146.0 L63.0 145.7 L64.0 145.5 L65.0 145.3 L66.0 145.1 L67.0 144.9 L68.0 144.7 L69.0 144.6 L70.0 144.4 L71.0 144.3 L72.0 144.2 L73.0 144.0 L74.0 143.9 L75.0 143.7 L76.0 143.6 L77.0 143.5 L78.0 143.4 L79.0 143.3 L80.0 143.2 L81.0 143.2 L82.0 143.1 L83.0 143.1 L84.0 143.1 L85.0 143.0 L86.0 143.0 L87.0 143.0 L88.0 143.0 L89.0 142.9 L90.0 142.9 L91.0 142.9 L92.0 142.9 L93.0 143.0 L94.0 143.0 L95.0 143.1 L96.0 143.3 L97.0 143.5 L98.0 143.7 L99.0 144.0 L100.0 144.3 L101.0 144.6 L102.0 145.1 L103.0 145.5 L104.0 146.1 L105.0 146.6 L106.0 147.2 L107.0 147.8 L108.0 148.5 L109.0 149.3 L110.0 150.1 L111.0 150.9 L112.0 151.9 L113.0 152.9 L114.0 154.0 L115.0 155.1 L116.0 156.2 L117.0 157.4 L118.0 158.5 L119.0 159.7 L120.0 160.8 L121.0 162.0 L122.0 163.1 L123.0 164.2 L124.0 165.2 L125.0 166.2 L126.0 167.2 L127.0 168.1 L128.0 169.0 L129.0 169.9 L130.0 170.7 L131.0 171.6 L132.0 172.4 L133.0 173.3 L134.0 174.1 L135.0 174.9 L136.0 175.8 L137.0 176.6 L138.0 177.4 L139.0 178.2 L140.0 178.9 L141.0 179.7 L142.0 180.5 L143.0 181.2 L144.0 182.0 L145.0 182.7 L146.0 183.5 L147.0 184.2 L148.0 185.0 L149.0 185.7 L150.0 186.4 L151.0 187.2 L152.0 187.9 L153.0 188.7 L154.0 189.4 L155.0 190.1 L156.0 190.8 L157.0 191.5 L158.0 192.2 L159.0 192.8 L160.0 193.5 L161.0 194.1 L162.0 194.7 L163.0 195.3 L164.0 196.0 L165.0 196.6 L166.0 197.2 L167.0 197.8 L168.0 198.5 L169.0 199.1 L170.0 199.7 L171.0 200.3 L172.0 201.0 L173.0 201.6 L174.0 202.2 L175.0 202.8 L176.0 203.4 L177.0 204.1 L178.0 204.7 L179.0 205.3 L180.0 205.9 L181.0 206.5 L182.0 207.2 L183.0 207.8 L184.0 208.4 L185.0 209.0 L186.0 209.7 L187.0 210.3 L188.0 210.9 L189.0 211.5 L190.0 212.0 L191.0 212.6 L192.0 213.1 L193.0 213.5 L194.0 213.9 L195.0 214.3 L196.0 214.5 L197.0 214.8 L198.0 215.1 L199.0 215.3 L200.0 215.5 L201.0 215.7 L202.0 215.9 L203.0 216.2 L204.0 216.4 L205.0 216.6 L206.0 216.8 L207.0 217.0 L208.0 217.2 L209.0 217.4 L210.0 217.6 L211.0 217.7 L212.0 217.8 L213.0 217.9 L214.0 217.9 L215.0 217.9 L216.0 217.8 L217.0 217.7 L218.0 217.7 L219.0 217.6 L220.0 217.5 L221.0 217.4 L222.0 217.3 L223.0 217.3 L224.0 217.2 L225.0 217.2 L226.0 217.1 L227.0 217.1 L228.0 217.1 L229.0 217.2 L230.0 217.2 L231.0 217.2 L232.0 217.3 L233.0 217.3 L234.0 217.3 L235.0 217.4 L236.0 217.4 L237.0 217.4 L238.0 217.5 L239.0 217.5 L240.0 217.6 L241.0 217.7 L242.0 217.8 L243.0 217.8 L244.0 217.9 L245.0 218.1 L246.0 218.2 L247.0 218.3 L248.0 218.4 L249.0 218.5 L250.0 218.6 L251.0 218.8 L252.0 218.9 L253.0 219.0 L254.0 219.1 L255.0 219.3 L256.0 219.4 L257.0 219.6 L258.0 219.7 L259.0 219.9 L260.0 220.1 L261.0 220.2 L262.0 220.4 L263.0 220.6 L264.0 220.7 L265.0 220.8 L266.0 220.9 L267.0 221.0 L268.0 221.0 L269.0 221.0 L270.0 221.1 L271.0 221.1 L272.0 221.1 L273.0 221.1 L274.0 221.1 L275.0 221.1 L276.0 221.1 L277.0 221.2 L278.0 221.2 L279.0 221.2 L280.0 221.2 L281.0 221.2 L282.0 221.2 L283.0 221.2 L284.0 221.3 L285.0 221.3 L286.0 221.3 L287.0 221.3 L288.0 221.3 L289.0 221.3 L290.0 221.4 L291.0 221.4 L292.0 221.4 L293.0 221.4 L294.0 221.4 L295.0 221.5 L296.0 221.5 L297.0 221.5 L298.0 221.5 L299.0 221.5 L300.0 221.6 L301.0 221.6 L302.0 221.6 L303.0 221.6 L304.0 221.6 L305.0 221.6 L306.0 221.6 L307.0 221.6 L308.0 221.6 L309.0 221.6 L310.0 221.6 L311.0 221.6 L312.0 221.6 L313.0 221.6 L314.0 221.5 L315.0 221.5 L316.0 221.5 L317.0 221.5 L318.0 221.5 L319.0 221.4 L320.0 221.4 L321.0 221.4 L322.0 221.4 L323.0 221.3 L324.0 221.3 L325.0 221.3 L326.0 221.3 L327.0 221.2 L328.0 221.2 L329.0 221.2 L330.0 221.1 L331.0 221.1 L332.0 221.1 L333.0 221.0 L334.0 221.0 L335.0 221.0 L336.0 221.0 L337.0 220.9 L338.0 220.9 L339.0 220.9 L340.0 220.8 L341.0 220.8 L342.0 220.7 L343.0 220.6 L344.0 220.5 L345.0 220.4 L346.0 220.3 L347.0 220.2 L348.0 220.0 L349.0 219.9 L350.0 219.7 L351.0 219.5 L352.0 219.4 L353.0 219.2 L354.0 219.1 L355.0 218.9 L356.0 218.7 L357.0 218.6 L358.0 218.4 L359.0 218.2 L360.0 218.1 L361.0 217.9 L362.0 217.8 L363.0 217.6 L364.0 217.5 L365.0 217.3 L366.0 217.2 L367.0 217.1 L368.0 216.9 L369.0 216.8 L370.0 216.7 L371.0 216.6 L372.0 216.4 L373.0 216.3 L374.0 216.2 L375.0 216.0 L376.0 215.9 L377.0 215.8 L378.0 215.6 L379.0 215.4 L380.0 215.3 L381.0 215.1 L382.0 214.9 L383.0 214.7 L384.0 214.5 L385.0 214.3 L386.0 214.1 L387.0 213.9 L388.0 213.7 L389.0 213.5 L390.0 213.3 L391.0 213.1 L392.0 212.9 L393.0 212.7 L394.0 212.5 L395.0 212.3 L396.0 212.1 L397.0 211.8 L398.0 211.6 L399.0 211.4 L400.0 211.1 L401.0 210.9 L402.0 210.6 L403.0 210.3 L404.0 210.1 L405.0 209.8 L406.0 209.5 L407.0 209.2 L408.0 208.9 L409.0 208.6 L410.0 208.4 L411.0 208.1 L412.0 207.8 L413.0 207.5 L414.0 207.2 L415.0 206.9 L416.0 206.7 L417.0 206.4 L418.0 206.1 L419.0 205.8 L420.0 205.6 L421.0 205.3 L422.0 205.0 L423.0 204.8 L424.0 204.5 L425.0 204.3 L426.0 204.0 L427.0 203.8 L428.0 203.5 L429.0 203.3 L430.0 203.0 L431.0 202.8 L432.0 202.5 L433.0 202.3 L434.0 202.0 L435.0 201.8 L436.0 201.6 L437.0 201.5 L438.0 201.4 L439.0 201.3 L440.0 201.2 L441.0 201.2 L442.0 201.2 L443.0 201.3 L444.0 201.3 L445.0 201.4 L446.0 201.4 L447.0 201.5 L448.0 201.5 L449.0 201.6 L450.0 201.6 L451.0 201.7 L452.0 201.7 L453.0 201.8 L454.0 201.8 L455.0 201.9 L456.0 202.0 L457.0 202.0 L458.0 202.1 L459.0 202.1 L460.0 202.2 L461.0 202.2 L462.0 202.3 L463.0 202.3 L464.0 202.4 L465.0 202.5 L466.0 202.5 L467.0 202.6 L468.0 202.6 L469.0 202.7 L470.0 202.7 L471.0 202.7 L472.0 202.7 L473.0 202.7 L474.0 202.6 L475.0 202.5 L476.0 202.4 L477.0 202.2 L478.0 201.9 L479.0 201.7 L480.0 201.4 L481.0 201.2 L482.0 200.9 L483.0 200.6 L484.0 200.3 L485.0 200.1 L486.0 199.8 L487.0 199.5 L488.0 199.2 L489.0 198.9 L490.0 198.7 L491.0 198.4 L492.0 198.1 L493.0 197.8 L494.0 197.6 L495.0 197.3 L496.0 197.1 L497.0 196.8 L498.0 196.5 L499.0 196.3 L500.0 196.0 L501.0 195.8 L502.0 195.5 L503.0 195.3 L504.0 195.0 L505.0 194.8 L506.0 194.5 L507.0 194.2 L508.0 193.9 L509.0 193.6 L510.0 193.2 L511.0 192.8 L512.0 192.4 L513.0 191.9 L514.0 191.3 L515.0 190.8 L516.0 190.2 L517.0 189.6 L518.0 189.0 L519.0 188.4 L520.0 187.7 L521.0 187.0 L522.0 186.2 L523.0 185.4 L524.0 184.5 L525.0 183.6 L526.0 182.7 L527.0 181.7 L528.0 180.8 L529.0 179.8 L530.0 178.9 L531.0 178.0 L532.0 177.1 L533.0 176.4 L534.0 175.7 L535.0 175.1 L536.0 174.5 L537.0 174.0 L538.0 173.6 L539.0 173.2 L540.0 172.8 L541.0 172.4 L542.0 172.0 L543.0 171.6 L544.0 171.2 L545.0 170.8 L546.0 170.4 L547.0 170.0 L548.0 169.6 L549.0 169.1 L550.0 168.7 L551.0 168.2 L552.0 167.7 L553.0 167.1 L554.0 166.6 L555.0 166.0 L556.0 165.5 L557.0 164.9 L558.0 164.4 L559.0 163.9 L560.0 163.4 L561.0 163.0 L562.0 162.6 L563.0 162.3 L564.0 162.1 L565.0 161.9 L566.0 161.7 L567.0 161.6 L568.0 161.5 L569.0 161.4 L570.0 161.3 L571.0 161.3 L572.0 161.2 L573.0 161.1 L574.0 161.0 L575.0 161.0 L576.0 160.9 L577.0 160.9 L578.0 160.9 L579.0 160.9 L580.0 161.0 L581.0 161.1 L582.0 161.3 L583.0 161.4 L584.0 161.6 L585.0 161.8 L586.0 162.1 L587.0 162.3 L588.0 162.6 L589.0 162.9 L590.0 163.3 L591.0 163.7 L592.0 164.3 L593.0 164.8 L594.0 165.4 L595.0 166.1 L596.0 166.8 L597.0 167.5 L598.0 168.3 L599.0 169.1 L600.0 169.9 L601.0 170.8 L602.0 171.7 L603.0 172.6 L604.0 173.5 L605.0 174.5 L606.0 175.5 L607.0 176.5 L608.0 177.5 L609.0 178.5 L610.0 179.6 L611.0 180.8 L612.0 181.9 L613.0 183.1 L614.0 184.4 L615.0 185.6 L616.0 186.8 L617.0 188.1 L618.0 189.3 L619.0 190.5 L620.0 191.7 L621.0 192.9 L622.0 194.0 L623.0 195.2 L624.0 196.4 L625.0 197.5 L626.0 198.6 L627.0 199.7 L628.0 200.8 L629.0 201.8 L630.0 202.8 L631.0 203.9 L632.0 204.9 L633.0 205.9 L634.0 206.8 L635.0 207.8 L636.0 208.8 L637.0 209.8 L638.0 210.8 L639.0 211.8 L640.0 212.9 L641.0 213.9 L642.0 214.9 L643.0 216.0 L644.0 217.0 L645.0 218.1 L646.0 219.1 L647.0 220.2 L648.0 221.3 L649.0 222.3 L650.0 223.4 L651.0 224.5 L652.0 225.7 L653.0 226.8 L654.0 228.0 L655.0 229.2 L656.0 230.5 L657.0 231.7 L658.0 233.0 L659.0 234.3 L660.0 235.6 L661.0 236.9 L662.0 238.2 L663.0 239.4 L664.0 240.6 L665.0 241.7 L666.0 242.8 L667.0 243.8 L668.0 244.8 L669.0 245.7 L670.0 246.5 L671.0 247.4 L672.0 248.2 L673.0 249.0 L674.0 249.8 L675.0 250.6 L676.0 251.5 L677.0 252.3 L678.0 253.1 L679.0 253.8 L680.0 254.6 L681.0 255.4 L682.0 256.2 L683.0 256.9 L684.0 257.7 L685.0 258.4 L686.0 259.2 L687.0 259.9 L688.0 260.7 L689.0 261.4 L690.0 262.1 L691.0 262.9 L692.0 263.5 L693.0 264.2 L694.0 264.8 L695.0 265.4 L696.0 265.9 L697.0 266.3 L698.0 266.8 L699.0 267.2 L700.0 267.6 L701.0 268.0 L702.0 268.4 L703.0 268.8 L704.0 269.2 L705.0 269.5 L706.0 269.9 L707.0 270.3 L708.0 270.6 L709.0 270.9 L710.0 271.1 L711.0 271.4 L712.0 271.5 L713.0 271.7 L714.0 271.8 L715.0 271.9 L716.0 271.9 L717.0 272.0 L718.0 272.1 L719.0 272.2 L720.0 272.2 L721.0 272.3 L722.0 272.4 L723.0 272.5 L724.0 272.6 L725.0 272.7 L726.0 272.8 L727.0 273.0 L728.0 273.2 L729.0 273.3 L730.0 273.5 L731.0 273.7 L732.0 273.9 L733.0 274.1 L734.0 274.3 L735.0 274.5 L736.0 274.6 L737.0 274.8 L738.0 274.9 L739.0 275.0 L740.0 275.1 L741.0 275.2 L742.0 275.3 L743.0 275.3 L744.0 275.4 L745.0 275.4 L746.0 275.5 L747.0 275.5 L748.0 275.5 L749.0 275.6 L750.0 275.6 L751.0 275.7 L752.0 275.7 L753.0 275.7 L754.0 275.8 L755.0 275.8 L756.0 275.9 L757.0 275.9 L758.0 275.9 L759.0 276.0 L760.0 276.1 L761.0 276.1 L762.0 276.2 L763.0 276.3 L764.0 276.4 L765.0 276.5 L766.0 276.6 L767.0 276.7 L768.0 276.8 L769.0 276.9 L770.0 277.1 L771.0 277.2 L772.0 277.3 L773.0 277.4 L774.0 277.5 L775.0 277.6 L776.0 277.7 L777.0 277.9 L778.0 278.0 L779.0 278.2 L780.0 278.3 L781.0 278.5 L782.0 278.7 L783.0 278.9 L784.0 279.1 L785.0 279.3 L786.0 279.5 L787.0 279.7 L788.0 279.9 L789.0 280.1 L790.0 280.2 L791.0 280.4 L792.0 280.6 L793.0 280.8 L794.0 281.0 L795.0 281.2 L796.0 281.5 L797.0 281.7 L798.0 281.9 L799.0 282.2 L800.0 282.6 L801.0 282.9 L802.0 283.3 L803.0 283.8 L804.0 284.2 L805.0 284.7 L806.0 285.2 L807.0 285.7 L808.0 286.1 L809.0 286.6 L810.0 287.1 L811.0 287.6 L812.0 288.1 L813.0 288.6 L814.0 289.0 L815.0 289.5 L816.0 289.9 L817.0 290.4 L818.0 290.8 L819.0 291.2 L820.0 291.6 L821.0 292.0 L822.0 292.4 L823.0 292.8 L824.0 293.2 L825.0 293.6 L826.0 294.0 L827.0 294.4 L828.0 294.9 L829.0 295.3 L830.0 295.7 L831.0 296.2 L832.0 296.7 L833.0 297.2 L834.0 297.8 L835.0 298.3 L836.0 298.8 L837.0 299.4 L838.0 299.9 L839.0 300.5 L840.0 301.0 L841.0 301.6 L842.0 302.2 L843.0 302.7 L844.0 303.3 L845.0 303.8 L846.0 304.4 L847.0 304.9 L848.0 305.5 L849.0 306.0 L850.0 306.6 L851.0 307.1 L852.0 307.7 L853.0 308.2 L854.0 308.8 L855.0 309.3 L856.0 309.9 L857.0 310.4 L858.0 311.0 L859.0 311.5 L860.0 312.1 L861.0 312.7 L862.0 313.3 L863.0 313.9 L864.0 314.6 L865.0 315.2 L866.0 315.9 L867.0 316.5 L868.0 317.2 L869.0 317.8 L870.0 318.5 L871.0 319.1 L872.0 319.8 L873.0 320.4 L874.0 321.0 L875.0 321.7 L876.0 322.3 L877.0 322.9 L878.0 323.5 L879.0 324.1 L880.0 324.8 L881.0 325.4 L882.0 325.9 L883.0 326.5 L884.0 327.1 L885.0 327.7 L886.0 328.3 L887.0 328.9 L888.0 329.5 L889.0 330.1 L890.0 330.6 L891.0 331.2 L892.0 331.7 L893.0 332.2 L894.0 332.7 L895.0 333.2 L896.0 333.6 L897.0 334.1 L898.0 334.5 L899.0 335.0 L900.0 335.5 L901.0 335.9 L902.0 336.4 L903.0 336.8 L904.0 337.3 L905.0 337.7 L906.0 338.1 L907.0 338.6 L908.0 339.0 L909.0 339.4 L910.0 339.8 L911.0 340.2 L912.0 340.6 L913.0 341.0 L914.0 341.4 L915.0 341.8 L916.0 342.2 L917.0 342.6 L918.0 343.0 L919.0 343.4 L920.0 343.7 L921.0 344.1 L922.0 344.4 L923.0 344.7 L924.0 344.9 L925.0 345.2 L926.0 345.4 L927.0 345.6 L928.0 345.8 L929.0 346.0 L930.0 346.2 L931.0 346.4 L932.0 346.6 L933.0 346.8 L934.0 347.0 L935.0 347.2 L936.0 347.4 L937.0 347.6 L938.0 347.8 L939.0 347.9 L940.0 348.1 L941.0 348.3 L942.0 348.4 L943.0 348.6 L944.0 348.7 L945.0 348.9 L946.0 349.0 L947.0 349.2 L948.0 349.3 L949.0 349.5 L950.0 349.6 L951.0 349.8 L952.0 349.9 L953.0 350.0 L954.0 350.1 L955.0 350.2 L956.0 350.3 L957.0 350.4 L958.0 350.5 L959.0 350.6 L960.0 350.7 L961.0 350.8 L962.0 350.9 L963.0 351.0 L964.0 351.1 L965.0 351.2 L966.0 351.3 L967.0 351.3 L968.0 351.4 L969.0 351.4 L970.0 351.5 L971.0 351.5 L972.0 351.5 L973.0 351.5 L974.0 351.5 L975.0 351.5 L976.0 351.5 L977.0 351.5 L978.0 351.5 L979.0 351.5 L980.0 351.5 L981.0 351.5 L982.0 351.6 L983.0 351.6 L984.0 351.7 L985.0 351.7 L986.0 351.8 L987.0 351.9 L988.0 351.9 L989.0 352.0 L990.0 352.1 L991.0 352.2 L992.0 352.3 L993.0 352.4 L994.0 352.5 L995.0 352.6 L996.0 352.7 L997.0 352.8 L998.0 352.9 L999.0 353.0 L1000.0 353.1 L1001.0 353.3 L1002.0 353.5 L1003.0 353.6 L1004.0 353.8 L1005.0 354.0 L1006.0 354.2 L1007.0 354.5 L1008.0 354.7 L1009.0 354.9 L1010.0 355.1 L1011.0 355.3 L1012.0 355.5 L1013.0 355.7 L1014.0 355.9 L1015.0 356.2 L1016.0 356.4 L1017.0 356.6 L1018.0 356.9 L1019.0 357.1 L1020.0 357.4 L1021.0 357.6 L1022.0 357.8 L1023.0 358.1 L1024.0 358.3 L1025.0 358.6 L1026.0 358.8 L1027.0 359.0 L1028.0 359.2 L1029.0 359.5 L1030.0 359.7 L1031.0 359.9 L1032.0 360.1 L1033.0 360.3 L1034.0 360.5 L1035.0 360.6 L1036.0 360.8 L1037.0 361.0 L1038.0 361.2 L1039.0 361.4 L1040.0 361.6 L1041.0 361.8 L1042.0 362.0 L1043.0 362.1 L1044.0 362.3 L1045.0 362.5 L1046.0 362.6 L1047.0 362.8 L1048.0 362.9 L1049.0 363.1 L1050.0 363.3 L1051.0 363.4 L1052.0 363.6 L1053.0 363.7 L1054.0 363.9 L1055.0 364.0 L1056.0 364.2 L1057.0 364.3 L1058.0 364.5 L1059.0 364.6 L1060.0 364.8 L1061.0 364.9 L1062.0 365.1 L1063.0 365.2 L1064.0 365.4 L1065.0 365.5 L1066.0 365.7 L1067.0 365.8 L1068.0 366.0 L1069.0 366.1 L1070.0 366.2 L1071.0 366.3 L1072.0 366.4 L1073.0 366.5 L1074.0 366.6 L1075.0 366.7 L1076.0 366.8 L1077.0 366.9 L1078.0 367.0 L1079.0 367.1 L1080.0 367.2 L1081.0 367.2 L1082.0 367.3 L1083.0 367.4 L1084.0 367.5 L1085.0 367.5 L1086.0 367.6 L1087.0 367.7 L1088.0 367.8 L1089.0 367.8 L1090.0 367.9 L1091.0 368.0 L1092.0 368.0 L1093.0 368.1 L1094.0 368.1 L1095.0 368.2 L1096.0 368.2 L1097.0 368.3 L1098.0 368.3 L1099.0 368.4 L1100.0 368.4 L1101.0 368.4 L1102.0 368.4 L1103.0 368.4 L1104.0 368.4 L1105.0 368.4 L1106.0 368.5 L1107.0 368.5 L1108.0 368.6 L1109.0 368.7 L1110.0 368.8 L1111.0 368.9 L1112.0 369.1 L1113.0 369.3 L1114.0 369.5 L1115.0 369.7 L1116.0 369.9 L1117.0 370.2 L1118.0 370.4 L1119.0 370.7 L1120.0 370.9 L1121.0 371.2 L1122.0 371.5 L1123.0 371.8 L1124.0 372.1 L1125.0 372.4 L1126.0 372.7 L1127.0 373.0 L1128.0 373.3 L1129.0 373.6 L1130.0 373.9 L1131.0 374.2 L1132.0 374.5 L1133.0 374.8 L1134.0 375.1 L1135.0 375.4 L1136.0 375.7 L1137.0 376.0 L1138.0 376.3 L1139.0 376.6 L1140.0 376.9 L1141.0 377.2 L1142.0 377.6 L1143.0 377.9 L1144.0 378.2 L1145.0 378.6 L1146.0 379.0 L1147.0 379.4 L1148.0 379.8 L1149.0 380.2 L1150.0 380.7 L1151.0 381.2 L1152.0 381.7 L1153.0 382.2 L1154.0 382.7 L1155.0 383.2 L1156.0 383.7 L1157.0 384.2 L1158.0 384.7 L1159.0 385.2 L1160.0 385.7 L1161.0 386.2 L1162.0 386.7 L1163.0 387.3 L1164.0 387.8 L1165.0 388.3 L1166.0 388.9 L1167.0 389.4 L1168.0 390.0 L1169.0 390.5 L1170.0 391.0 L1171.0 391.6 L1172.0 392.1 L1173.0 392.7 L1174.0 393.2 L1175.0 393.8 L1176.0 394.3 L1177.0 394.9 L1178.0 395.4 L1179.0 396.0 L1180.0 396.5 L1181.0 397.1 L1182.0 397.6 L1183.0 398.2 L1184.0 398.7 L1185.0 399.3 L1186.0 399.8 L1187.0 400.4 L1188.0 400.9 L1189.0 401.5 L1190.0 402.0 L1191.0 402.6 L1192.0 403.1 L1193.0 403.7 L1194.0 404.2 L1195.0 404.7 L1196.0 405.3 L1197.0 405.8 L1198.0 406.3 L1199.0 406.8 L1200.0 407.3 L1201.0 407.7 L1202.0 408.1 L1203.0 408.5 L1204.0 408.9 L1205.0 409.2 L1206.0 409.6 L1207.0 409.9 L1208.0 410.3 L1209.0 410.6 L1210.0 411.0 L1211.0 411.3 L1212.0 411.6 L1213.0 411.9 L1214.0 412.2 L1215.0 412.5 L1216.0 412.8 L1217.0 413.1 L1218.0 413.4 L1219.0 413.6 L1220.0 413.9 L1221.0 414.1 L1222.0 414.4 L1223.0 414.6 L1224.0 414.9 L1225.0 415.1 L1226.0 415.4 L1227.0 415.6 L1228.0 415.8 L1229.0 416.0 L1230.0 416.3 L1231.0 416.5 L1232.0 416.7 L1233.0 416.9 L1234.0 417.1 L1235.0 417.3 L1236.0 417.4 L1237.0 417.6 L1238.0 417.8 L1239.0 418.0 L1240.0 418.1 L1241.0 418.2 L1242.0 418.3 L1243.0 418.3 L1244.0 418.4 L1245.0 418.4 L1246.0 418.4 L1247.0 418.4 L1248.0 418.4 L1249.0 418.3 L1250.0 418.3 L1251.0 418.3 L1252.0 418.3 L1253.0 418.2 L1254.0 418.2 L1255.0 418.1 L1256.0 418.1 L1257.0 418.0 L1258.0 417.9 L1259.0 417.8 L1260.0 417.8 L1261.0 417.7 L1262.0 417.6 L1263.0 417.5 L1264.0 417.4 L1265.0 417.3 L1266.0 417.2 L1267.0 417.1 L1268.0 417.0 L1269.0 416.8 L1270.0 416.6 L1271.0 416.4 L1272.0 416.2 L1273.0 416.0 L1274.0 415.8 L1275.0 415.5 L1276.0 415.3 L1277.0 415.1 L1278.0 414.8 L1279.0 414.6 L1280.0 414.4 L1281.0 414.1 L1282.0 413.9 L1283.0 413.7 L1284.0 413.5 L1285.0 413.3 L1286.0 413.1 L1287.0 412.9 L1288.0 412.7 L1289.0 412.5 L1290.0 412.3 L1291.0 412.1 L1292.0 411.9 L1293.0 411.7 L1294.0 411.5 L1295.0 411.3 L1296.0 411.1 L1297.0 410.9 L1298.0 410.7 L1299.0 410.5 L1300.0 410.3 L1301.0 410.1 L1302.0 409.9 L1303.0 409.7 L1304.0 409.5 L1305.0 409.3 L1306.0 409.1 L1307.0 408.8 L1308.0 408.6 L1309.0 408.4 L1310.0 408.2 L1311.0 408.0 L1312.0 407.8 L1313.0 407.6 L1314.0 407.4 L1315.0 407.2 L1316.0 407.0 L1317.0 406.8 L1318.0 406.6 L1319.0 406.4 L1320.0 406.2 L1321.0 406.0 L1322.0 405.9 L1323.0 405.7 L1324.0 405.5 L1325.0 405.4 L1326.0 405.3 L1327.0 405.2 L1328.0 405.1 L1329.0 405.0 L1330.0 404.9 L1331.0 404.9 L1332.0 404.9 L1333.0 404.9 L1334.0 404.9 L1335.0 404.9 L1336.0 404.9 L1337.0 405.0 L1338.0 405.0 L1339.0 405.1 L1340.0 405.1 L1341.0 405.2 L1342.0 405.2 L1343.0 405.3 L1344.0 405.3 L1345.0 405.4 L1346.0 405.4 L1347.0 405.5 L1348.0 405.5 L1349.0 405.6 L1350.0 405.6 L1351.0 405.6 L1352.0 405.7 L1353.0 405.7 L1354.0 405.8 L1355.0 405.8 L1356.0 405.8 L1357.0 405.9 L1358.0 405.9 L1359.0 405.9 L1360.0 406.0 L1361.0 406.0 L1362.0 405.9 L1363.0 405.9 L1364.0 405.8 L1365.0 405.8 L1366.0 405.7 L1367.0 405.6 L1368.0 405.5 L1369.0 405.4 L1370.0 405.3 L1371.0 405.1 L1372.0 405.0 L1373.0 404.8 L1374.0 404.6 L1375.0 404.4 L1376.0 404.1 L1377.0 403.8 L1378.0 403.5 L1379.0 403.2 L1380.0 402.8 L1381.0 402.5 L1382.0 402.1 L1383.0 401.7 L1384.0 401.4 L1385.0 401.0 L1386.0 400.7 L1387.0 400.3 L1388.0 400.0 L1389.0 399.7 L1390.0 399.4 L1391.0 399.2 L1392.0 398.9 L1393.0 398.7 L1394.0 398.6 L1395.0 398.4" fill="none" stroke="#2196f3" stroke-width="1.15"/>
<rect x="12" y="467" width="1573" height="1" fill="#2e2e2e"/>
<g clip-path="url(#cr)">
<rect x="12" y="513" width="1505" height="121" fill="#7e57c2" fill-opacity="0.1"/>
<path d="M122.3 633.5 L123.5 637.0 L128.4 655.0 L130.8 645.5 L136.8 648.0 L141.2 633.5Z M599.6 633.5 L600.0 634.6 L602.0 635.8 L602.3 633.5Z M612.6 633.5 L614.0 641.8 L619.3 638.2 L628.5 654.0 L632.6 639.4 L637.4 644.3 L641.3 633.5Z M650.0 633.5 L658.0 655.0 L661.6 634.6 L665.2 639.4 L666.2 633.5Z M803.2 633.5 L803.6 634.6 L807.2 647.9 L809.7 644.3 L813.3 654.0 L818.0 656.3 L821.7 650.3 L824.4 633.5Z M828.3 633.5 L832.6 654.0 L838.6 644.3 L845.4 665.5 L849.5 638.2 L854.3 654.0 L857.4 633.5Z M860.5 633.5 L862.8 637.0 L863.6 633.5Z M876.1 633.5 L877.8 641.8 L881.9 633.5Z M894.1 633.5 L895.4 638.2 L899.0 640.6 L901.9 633.5Z M907.8 633.5 L908.7 635.8 L909.4 633.5Z M995.5 633.5 L997.6 638.2 L998.0 633.5Z M1013.7 633.5 L1014.5 635.8 L1017.4 634.6 L1021.3 639.4 L1022.4 633.5Z M1112.5 633.5 L1117.1 664.8 L1119.6 638.2 L1123.2 644.3 L1128.0 666.0 L1131.6 662.4 L1134.8 663.6 L1138.9 638.2 L1140.8 633.5Z M1142.3 633.5 L1145.0 637.0 L1149.3 641.4 L1151.7 661.2 L1155.8 654.0 L1160.6 661.2 L1166.7 638.2 L1169.0 643.0 L1172.7 644.3 L1175.2 633.5Z M1178.1 633.5 L1181.2 641.8 L1190.8 656.3 L1195.7 667.2 L1200.0 644.3 L1202.4 638.2 L1203.1 633.5Z" fill="url(#gl)"/>
<path d="M14.2 513.5 L14.8 510.2 L15.7 513.5Z M23.4 513.5 L29.8 492.0 L31.0 513.5Z M370.6 513.5 L372.0 505.4 L372.5 513.5Z M395.7 513.5 L396.9 509.0 L397.1 513.5Z M482.4 513.5 L483.3 509.0 L489.4 506.6 L490.7 513.5Z M513.2 513.5 L513.5 512.6 L518.4 489.7 L520.9 513.5Z M525.8 513.5 L527.5 509.0 L527.9 513.5Z M1366.4 513.5 L1366.6 509.0 L1367.0 513.5Z M1379.9 513.5 L1381.1 501.7 L1382.2 513.5Z" fill="url(#gh)"/>
<line x1="11" y1="513.5" x2="1516" y2="513.5" stroke="#74777f" stroke-dasharray="5 6" shape-rendering="crispEdges"/>
<line x1="11" y1="574.5" x2="1516" y2="574.5" stroke="#74777f" stroke-dasharray="5 6" shape-rendering="crispEdges"/>
<line x1="11" y1="634.5" x2="1516" y2="634.5" stroke="#74777f" stroke-dasharray="5 6" shape-rendering="crispEdges"/>
<path d="M10.0 538.0 L14.8 510.2 L19.2 527.0 L23.3 513.8 L29.8 492.0 L33.0 548.8 L39.0 550.0 L42.6 577.8 L46.2 586.3 L48.6 584.0 L52.3 590.0 L54.7 587.5 L57.1 573.0 L59.5 574.2 L63.0 565.7 L69.2 576.6 L71.6 564.5 L75.2 570.6 L80.0 590.0 L83.7 580.2 L87.3 581.4 L89.7 569.4 L93.3 585.0 L95.7 585.0 L99.4 614.0 L104.2 625.0 L107.8 616.5 L111.4 617.7 L116.3 625.0 L121.0 629.8 L123.5 637.0 L128.4 655.0 L130.8 645.5 L136.8 648.0 L141.6 632.2 L145.3 629.8 L148.9 622.5 L153.7 627.3 L158.6 616.5 L162.2 623.7 L168.2 605.6 L175.5 605.6 L179.0 625.0 L188.7 633.4 L191.2 627.3 L196.0 575.4 L200.8 573.0 L202.9 587.5 L206.0 565.7 L214.5 565.7 L221.7 575.4 L224.2 587.5 L231.4 596.0 L236.2 591.0 L242.3 606.8 L245.9 624.4 L250.7 610.4 L254.3 622.5 L256.8 603.2 L261.6 615.3 L265.2 627.3 L272.5 580.2 L274.9 586.3 L281.0 569.4 L283.3 585.0 L289.4 550.0 L291.8 553.7 L295.4 571.8 L297.8 553.7 L303.9 547.6 L313.5 535.6 L316.0 565.7 L319.6 558.5 L325.6 592.3 L328.0 592.3 L334.0 571.8 L339.6 592.3 L343.7 571.8 L351.0 573.0 L355.8 564.5 L359.4 557.3 L361.8 557.3 L366.7 535.6 L372.0 505.4 L375.8 563.3 L381.2 532.0 L384.8 546.4 L388.4 521.0 L390.8 532.0 L396.9 509.0 L399.3 570.6 L406.0 556.0 L408.5 569.4 L414.5 539.2 L420.5 556.0 L426.0 570.6 L429.5 555.0 L435.7 570.6 L439.9 598.4 L443.5 600.8 L449.5 609.2 L453.1 593.5 L458.0 587.5 L462.3 597.2 L465.2 596.0 L471.3 580.2 L477.3 521.0 L481.0 521.0 L483.3 509.0 L489.4 506.6 L494.9 535.6 L497.8 518.6 L500.2 530.7 L503.9 529.5 L506.3 556.0 L510.0 523.5 L513.5 512.6 L518.4 489.7 L522.0 523.5 L527.5 509.0 L530.4 544.0 L532.9 534.3 L536.5 579.0 L540.0 574.2 L545.0 592.3 L551.0 571.8 L557.0 580.2 L563.0 576.6 L566.2 582.7 L571.5 568.2 L578.3 570.6 L583.6 604.4 L588.4 612.9 L595.7 623.7 L600.0 634.6 L602.0 635.8 L604.8 616.5 L607.7 628.6 L610.9 623.7 L614.0 641.8 L619.3 638.2 L628.5 654.0 L632.6 639.4 L637.4 644.3 L643.5 627.3 L647.1 632.2 L649.5 632.2 L658.0 655.0 L661.6 634.6 L665.2 639.4 L670.0 611.6 L672.5 614.0 L676.0 605.6 L679.7 614.0 L682.0 614.0 L684.5 620.0 L688.2 611.6 L694.2 620.0 L699.0 590.0 L702.7 596.0 L706.3 585.0 L708.7 593.5 L714.7 573.0 L717.6 583.9 L720.8 579.0 L724.4 593.5 L726.8 590.0 L731.6 606.8 L735.3 614.0 L738.9 590.0 L742.5 597.2 L749.8 603.2 L753.4 598.4 L757.0 599.6 L762.3 611.6 L765.5 598.4 L769.0 608.0 L774.0 603.2 L777.0 617.7 L780.0 594.7 L783.6 597.2 L786.0 605.6 L792.0 592.3 L794.4 625.0 L798.0 631.0 L800.0 623.7 L803.6 634.6 L807.2 647.9 L809.7 644.3 L813.3 654.0 L818.0 656.3 L821.7 650.3 L824.6 632.2 L827.8 631.0 L832.6 654.0 L838.6 644.3 L845.4 665.5 L849.5 638.2 L854.3 654.0 L858.0 629.8 L862.8 637.0 L865.7 624.4 L870.0 632.2 L874.4 625.0 L877.8 641.8 L882.0 633.4 L890.6 621.3 L895.4 638.2 L899.0 640.6 L905.0 626.1 L908.7 635.8 L913.5 619.0 L916.0 588.7 L919.6 585.0 L923.2 594.7 L929.2 581.4 L931.6 583.9 L934.0 581.4 L937.7 598.4 L941.3 598.4 L943.7 606.8 L947.3 603.2 L951.0 606.8 L958.2 602.0 L961.8 612.9 L965.5 619.6 L967.9 614.0 L973.9 565.7 L976.3 583.9 L980.0 579.0 L986.0 602.0 L989.6 606.8 L994.4 631.0 L997.6 638.2 L1000.0 610.4 L1006.0 604.4 L1009.7 622.5 L1014.5 635.8 L1017.4 634.6 L1021.3 639.4 L1024.2 623.7 L1029.0 617.7 L1033.3 616.5 L1035.7 625.0 L1038.6 607.5 L1042.3 612.9 L1044.7 621.3 L1047.8 591.0 L1056.8 593.5 L1059.2 587.5 L1066.4 591.0 L1068.8 588.7 L1072.0 564.5 L1077.3 544.0 L1082.1 573.0 L1085.7 602.0 L1090.6 590.0 L1095.4 598.4 L1098.6 600.3 L1101.0 590.0 L1104.3 586.8 L1108.7 608.0 L1112.3 632.2 L1117.1 664.8 L1119.6 638.2 L1123.2 644.3 L1128.0 666.0 L1131.6 662.4 L1134.8 663.6 L1138.9 638.2 L1141.3 632.2 L1145.0 637.0 L1149.3 641.4 L1151.7 661.2 L1155.8 654.0 L1160.6 661.2 L1166.7 638.2 L1169.0 643.0 L1172.7 644.3 L1176.3 628.5 L1181.2 641.8 L1190.8 656.3 L1195.7 667.2 L1200.0 644.3 L1202.4 638.2 L1205.3 620.0 L1210.9 605.6 L1214.5 615.2 L1218.1 611.6 L1223.4 571.8 L1225.8 592.3 L1229.0 596.0 L1232.6 611.6 L1235.0 573.0 L1238.6 575.4 L1241.5 586.3 L1247.0 554.9 L1252.0 548.8 L1256.0 534.3 L1259.2 556.0 L1262.3 548.8 L1265.2 556.0 L1268.8 540.4 L1272.4 548.8 L1276.8 545.2 L1279.7 547.6 L1283.3 560.9 L1288.9 563.3 L1291.8 554.9 L1294.2 577.8 L1297.8 557.3 L1301.0 558.5 L1303.4 536.7 L1306.3 540.4 L1310.6 552.4 L1315.9 546.4 L1319.5 552.4 L1322.0 553.7 L1325.1 557.3 L1328.0 554.9 L1333.5 628.5 L1339.6 592.3 L1342.5 593.5 L1344.9 580.2 L1353.3 569.4 L1358.2 581.4 L1362.5 589.9 L1366.6 509.0 L1369.0 536.7 L1371.9 547.1 L1377.5 538.0 L1381.1 501.7 L1384.7 541.6 L1387.2 538.0 L1390.3 527.1 L1393.2 531.9 L1395.6 530.2" fill="none" stroke="#7e57c2" stroke-width="1.2" stroke-linejoin="round"/>
<path d="M10.0 536.8C11.6 536.0 17.1 533.0 19.7 532.0C22.3 531.0 23.7 531.8 25.7 530.7C27.7 529.6 29.7 526.0 31.7 525.2C33.7 524.4 35.2 523.7 37.8 526.0C40.4 528.3 44.2 535.0 47.4 539.2C50.6 543.4 53.1 545.9 57.1 551.3C61.1 556.6 67.6 566.9 71.6 571.3C75.6 575.7 77.3 576.9 81.3 577.8C85.3 578.7 90.9 574.0 95.7 576.6C100.5 579.2 105.6 587.9 110.2 593.5C114.8 599.1 119.7 604.8 123.5 610.4C127.3 616.0 130.2 623.4 133.2 627.3C136.2 631.2 138.0 632.4 141.6 633.9C145.2 635.4 151.2 636.6 155.0 636.5C158.8 636.4 160.6 635.9 164.6 633.4C168.6 630.9 174.2 623.7 179.0 621.3C183.8 618.9 188.9 621.9 193.6 618.9C198.3 615.9 203.3 607.2 207.2 603.2C211.1 599.2 214.2 597.3 217.0 594.7C219.8 592.1 221.4 590.0 224.2 587.5C227.0 585.0 230.2 579.1 233.8 579.5C237.4 579.9 242.3 586.6 245.9 590.0C249.5 593.4 252.0 596.2 255.6 599.6C259.2 603.0 263.6 609.4 267.6 610.4C271.6 611.4 276.1 608.8 279.7 605.6C283.3 602.4 285.8 595.8 289.4 591.0C293.0 586.2 298.0 581.4 301.4 576.6C304.8 571.8 307.0 565.3 310.0 562.0C313.0 558.7 316.2 556.8 319.6 556.8C323.0 556.8 326.2 559.7 330.4 562.0C334.6 564.3 340.8 568.1 345.0 570.6C349.2 573.1 353.0 576.3 355.8 577.1C358.6 577.9 359.2 578.5 361.8 575.4C364.4 572.3 368.3 562.5 371.5 558.5C374.7 554.5 377.0 555.1 381.2 551.3C385.4 547.5 391.3 536.7 396.9 535.6C402.4 534.5 410.6 543.2 414.5 544.7C418.4 546.2 416.9 542.6 420.5 544.7C424.1 546.8 430.8 552.2 436.2 557.3C441.6 562.4 447.1 569.8 453.1 575.4C459.2 581.0 467.7 590.0 472.5 590.6C477.3 591.2 478.8 585.0 482.0 579.0C485.2 573.0 488.2 562.1 491.8 554.9C495.4 547.7 499.5 541.4 503.9 535.6C508.3 529.8 514.6 522.4 518.4 519.9C522.2 517.4 523.6 519.0 526.8 520.6C530.0 522.2 534.3 526.0 537.7 529.5C541.1 533.0 543.7 536.6 547.3 541.6C550.9 546.6 554.8 553.7 559.4 559.7C564.0 565.7 570.2 574.0 575.0 577.8C579.8 581.6 584.2 579.4 588.4 582.7C592.6 586.0 596.5 593.3 600.0 597.5C603.5 601.7 606.5 603.8 609.7 608.0C612.9 612.2 615.7 617.9 619.3 622.5C622.9 627.1 627.6 633.2 631.4 635.8C635.2 638.4 637.9 637.3 642.3 638.2C646.7 639.1 654.2 641.2 658.0 641.4C661.8 641.6 661.6 641.4 665.2 639.4C668.8 637.4 674.9 631.9 679.7 629.3C684.5 626.7 690.8 626.0 694.2 623.7C697.6 621.4 697.4 618.3 700.2 615.3C703.0 612.3 706.4 609.2 711.0 605.6C715.6 602.0 723.2 595.9 728.0 593.5C732.8 591.1 736.4 591.1 740.0 591.0C743.6 590.9 745.8 591.4 749.8 593.0C753.8 594.6 760.3 599.2 764.3 600.8C768.3 602.4 769.6 602.1 774.0 602.5C778.4 602.9 786.5 602.3 790.8 603.2C795.1 604.1 796.0 604.8 800.0 608.0C804.0 611.2 810.1 618.1 814.5 622.5C818.9 626.9 823.0 631.0 826.6 634.6C830.2 638.2 832.8 642.1 836.2 644.3C839.6 646.5 843.9 647.5 847.1 647.9C850.3 648.3 853.0 647.4 855.6 646.7C858.2 646.0 860.2 644.6 862.8 643.8C865.4 643.0 868.5 642.7 871.3 641.8C874.1 640.9 875.5 639.9 879.7 638.2C883.9 636.5 892.2 632.7 896.6 631.7C901.0 630.7 903.5 632.3 906.3 632.2C909.1 632.1 910.7 632.8 913.5 631.0C916.3 629.2 919.6 625.1 923.2 621.3C926.8 617.5 931.7 611.6 935.3 608.0C938.9 604.4 941.8 601.7 945.0 599.6C948.2 597.5 950.6 594.8 954.6 595.2C958.6 595.6 964.2 601.5 969.0 602.0C973.8 602.5 980.0 598.8 983.6 598.4C987.2 598.0 988.1 598.5 990.8 599.6C993.5 600.7 997.3 604.1 1000.0 604.7C1002.7 605.3 1004.8 601.8 1007.2 603.2C1009.6 604.6 1011.9 609.7 1014.5 612.9C1017.1 616.1 1020.2 620.6 1023.0 622.5C1025.8 624.4 1028.6 624.6 1031.4 624.4C1034.2 624.2 1037.5 621.6 1039.9 621.3C1042.3 621.0 1042.1 625.1 1045.9 622.5C1049.7 619.9 1058.4 609.8 1062.8 605.6C1067.2 601.4 1069.7 600.8 1072.5 597.2C1075.3 593.6 1077.3 586.5 1079.7 583.9C1082.1 581.3 1083.0 581.6 1087.0 581.4C1091.0 581.2 1100.1 581.9 1103.9 582.7C1107.7 583.5 1107.6 582.5 1110.0 586.3C1112.4 590.1 1115.4 600.0 1118.4 605.6C1121.4 611.2 1124.8 615.4 1128.0 620.0C1131.2 624.6 1133.9 628.6 1137.7 633.4C1141.5 638.2 1147.4 646.3 1151.0 649.0C1154.6 651.7 1157.2 649.3 1159.4 649.8C1161.6 650.3 1161.3 652.8 1164.3 652.0C1167.3 651.2 1173.1 645.6 1177.5 645.0C1181.9 644.4 1187.0 648.0 1190.8 648.6C1194.5 649.2 1196.8 649.7 1200.0 648.4C1203.2 647.1 1206.7 642.6 1209.7 640.6C1212.7 638.6 1214.5 640.1 1218.1 636.5C1221.7 632.9 1228.0 624.2 1231.4 618.9C1234.8 613.5 1235.8 609.2 1238.6 604.4C1241.4 599.6 1244.5 595.7 1248.3 589.9C1252.1 584.1 1258.6 573.6 1261.6 569.8C1264.6 566.0 1264.2 569.3 1266.4 567.0C1268.6 564.7 1271.9 558.8 1274.9 556.0C1277.9 553.2 1281.7 551.3 1284.5 550.5C1287.3 549.7 1289.6 550.5 1291.8 551.2C1294.0 551.9 1295.4 554.6 1297.8 554.9C1300.2 555.2 1302.9 553.1 1306.3 552.9C1309.7 552.7 1314.7 553.6 1318.3 553.7C1321.9 553.8 1324.8 551.7 1328.0 553.7C1331.2 555.7 1334.4 562.1 1337.6 565.7C1340.8 569.3 1344.5 573.2 1347.3 575.4C1350.1 577.6 1352.0 577.5 1354.6 579.0C1357.2 580.5 1360.2 584.6 1363.0 584.3C1365.8 584.0 1368.5 581.6 1371.5 577.1C1374.5 572.6 1377.9 562.2 1381.1 557.3C1384.3 552.4 1388.4 550.0 1390.8 547.6C1393.2 545.2 1394.8 543.6 1395.6 542.8" fill="none" stroke="#fdd835" stroke-width="1.2"/>
</g>
</svg>
<div class="t" style="left:20px;top:40px;transform:scaleX(0.971);transform-origin:0 0">OpenLedger · 1h · CRYPTO</div>
<div class="t" style="left:188px;top:40px">O</div>
<div class="t g" style="left:197px;top:40px">0.52963</div>
<div class="t" style="left:252.5px;top:40px">H</div>
<div class="t g" style="left:262px;top:40px">0.54753</div>
<div class="t" style="left:317px;top:40px">L</div>
<div class="t g" style="left:325px;top:40px">0.52392</div>
<div class="t" style="left:379.5px;top:40px">C</div>
<div class="t g" style="left:388px;top:40px">0.53177</div>
<div class="t g" style="left:443px;top:40px">+0.00214 (+0.40%)</div>
<div class="t" style="left:20px;top:58.5px">MA (30, close)</div>
<div class="t" style="left:114px;top:58.5px;color:#2196f3">0.47496</div>
<div class="t" style="left:20.5px;top:478px">RSI (14, close)</div>
<div class="t" style="left:114.5px;top:478px;color:#7e57c2">64.15</div>
<div class="t" style="left:155.5px;top:478px;color:#fdd835">60.23</div>

<div style="position:absolute;left:1521px;top:34px;width:58.5px;height:26px;border:2px solid #2e2e2e;border-radius:6px;background:#0f0f0f"></div>
<div class="t" style="left:1532px;top:41.2px;font-weight:bold;color:#c8c8c8;-webkit-text-stroke:0;transform:scaleX(0.875);transform-origin:0 0">USD</div>

<div class="ax" style="left:1528px;top:98px">1.10000</div>
<div class="ax" style="left:1528px;top:145px">1.00000</div>
<div class="ax" style="left:1528px;top:191.5px">0.90000</div>
<div class="ax" style="left:1528px;top:238px">0.80000</div>
<div class="ax" style="left:1528px;top:285px">0.70000</div>
<div class="ax" style="left:1528px;top:331.5px">0.60000</div>
<div class="ax" style="left:1528px;top:378px">0.50000</div>
<div class="ax" style="left:1528px;top:425px">0.40000</div>

<div class="ax" style="left:1527px;top:476px">80.00</div>
<div class="ax" style="left:1527px;top:596px">40.00</div>
<div class="ax" style="left:1527px;top:656px">20.00</div>

<div class="lab" style="left:1445px;top:362px;width:72px;background:#089981;border-radius:2px 0 0 2px"></div>
<div class="t" style="left:1449.5px;top:365px;color:#fff;font-weight:bold;-webkit-text-stroke:0;transform:scaleX(0.868);transform-origin:0 0">OPENLUSD</div>
<div class="lab" style="left:1518px;top:362px;width:64px;background:#089981;border-radius:0 2px 2px 0"></div>
<div class="t" style="left:1528px;top:365px;color:#fff;font-weight:bold;-webkit-text-stroke:0">0.53177</div>
<div class="lab" style="left:1518px;top:389px;width:64px;background:#2196f3;border-radius:0 2px 2px 0"></div>
<div class="t" style="left:1528px;top:392px;color:#fff;font-weight:bold;-webkit-text-stroke:0">0.47496</div>

<div class="lab" style="left:1518px;top:522px;width:50px;background:#7e57c2;border-radius:0 2px 0 0"></div>
<div class="t" style="left:1528px;top:525px;color:#fff;font-weight:bold;-webkit-text-stroke:0">64.15</div>
<div class="lab" style="left:1518px;top:541px;width:50px;background:#fdd835;border-radius:0 0 2px 0"></div>
<div class="t" style="left:1528px;top:544px;color:#131313">60.23</div>

<div class="ax" style="left:11px;top:696px;width:7px;overflow:hidden;direction:rtl">14</div>
<div class="ax" style="left:74.5px;top:696px">15</div>
<div class="ax" style="left:145.5px;top:696px">16</div>
<div class="ax" style="left:217px;top:696px">17</div>
<div class="ax" style="left:288.5px;top:696px">18</div>
<div class="ax" style="left:360px;top:696px">19</div>
<div class="ax" style="left:431px;top:696px">20</div>
<div class="ax" style="left:502.5px;top:696px">21</div>
<div class="ax" style="left:574px;top:696px">22</div>
<div class="ax" style="left:645.5px;top:696px">23</div>
<div class="ax" style="left:717px;top:696px">24</div>
<div class="ax" style="left:788px;top:696px">25</div>
<div class="ax" style="left:859.5px;top:696px">26</div>
<div class="ax" style="left:931px;top:696px">27</div>
<div class="ax" style="left:1002.5px;top:696px">28</div>
<div class="ax" style="left:1074px;top:696px">29</div>
<div class="ax" style="left:1145px;top:696px">30</div>
<div class="ax" style="left:1212px;top:696px;font-weight:bold;-webkit-text-stroke:0">Oct</div>
<div class="ax" style="left:1291px;top:696px">2</div>
<div class="ax" style="left:1362px;top:696px">3</div>
<div class="ax" style="left:1434px;top:696px">4</div>
<div class="ax" style="left:1505px;top:696px">5</div>

<svg style="position:absolute;left:0;top:0" width="60" height="787">
<path d="M13 744H27V761H20V750.6H13Z" fill="#dbdbdb"/>
<circle cx="32.4" cy="747.3" r="3.3" fill="#dbdbdb"/>
<path d="M39 744H46.8L40 761H32.2Z" fill="#dbdbdb"/>
</svg>
<div class="t" style="left:55px;top:739.5px;font-size:23px;line-height:26px;font-weight:bold;color:#dbdbdb;-webkit-text-stroke:0">TradingView</div>

<svg style="position:absolute;left:1380px;top:436px" width="45" height="32">
<circle cx="16.2" cy="16.4" r="10.8" fill="none" stroke="#b040c0" stroke-width="1.6"/>
<circle cx="27.3" cy="16.5" r="11.7" fill="#0f0f0f" stroke="#f23645" stroke-width="2"/>
<clipPath id="fl2"><circle cx="27.3" cy="16.5" r="9"/></clipPath>
<g clip-path="url(#fl2)">
<rect x="18" y="7" width="20" height="20" fill="#f0f0f0"/>
<rect x="18" y="7" width="20" height="4.5" fill="#e8504a"/>
<rect x="18" y="14.8" width="20" height="4" fill="#e8504a"/>
<rect x="18" y="22.1" width="20" height="5" fill="#e8504a"/>
</g>
<circle cx="21.9" cy="16.5" r="11.7" fill="#0f0f0f" stroke="#f23645" stroke-width="2"/>
<clipPath id="fl"><circle cx="21.9" cy="16.6" r="9.1"/></clipPath>
<g clip-path="url(#fl)">
<rect x="12" y="7" width="20" height="20" fill="#f0f0f0"/>
<rect x="12" y="7" width="20" height="4.9" fill="#e8504a"/>
<rect x="12" y="14.8" width="20" height="4" fill="#e8504a"/>
<rect x="12" y="22.1" width="20" height="5" fill="#e8504a"/>
<rect x="12" y="7" width="12.1" height="11.8" fill="#1e88e5"/>
<g fill="#e8f0ff"><circle cx="15.2" cy="9.9" r="0.8"/><circle cx="18.4" cy="9.9" r="0.8"/><circle cx="21.5" cy="9.9" r="0.8"/>
<circle cx="15.2" cy="13.1" r="0.8"/><circle cx="18.4" cy="13.1" r="0.8"/><circle cx="21.5" cy="13.1" r="0.8"/>
<circle cx="15.2" cy="16.1" r="0.8"/><circle cx="18.4" cy="16.1" r="0.8"/><circle cx="21.5" cy="16.1" r="0.8"/></g>
</g>
</svg>
</body></html>
